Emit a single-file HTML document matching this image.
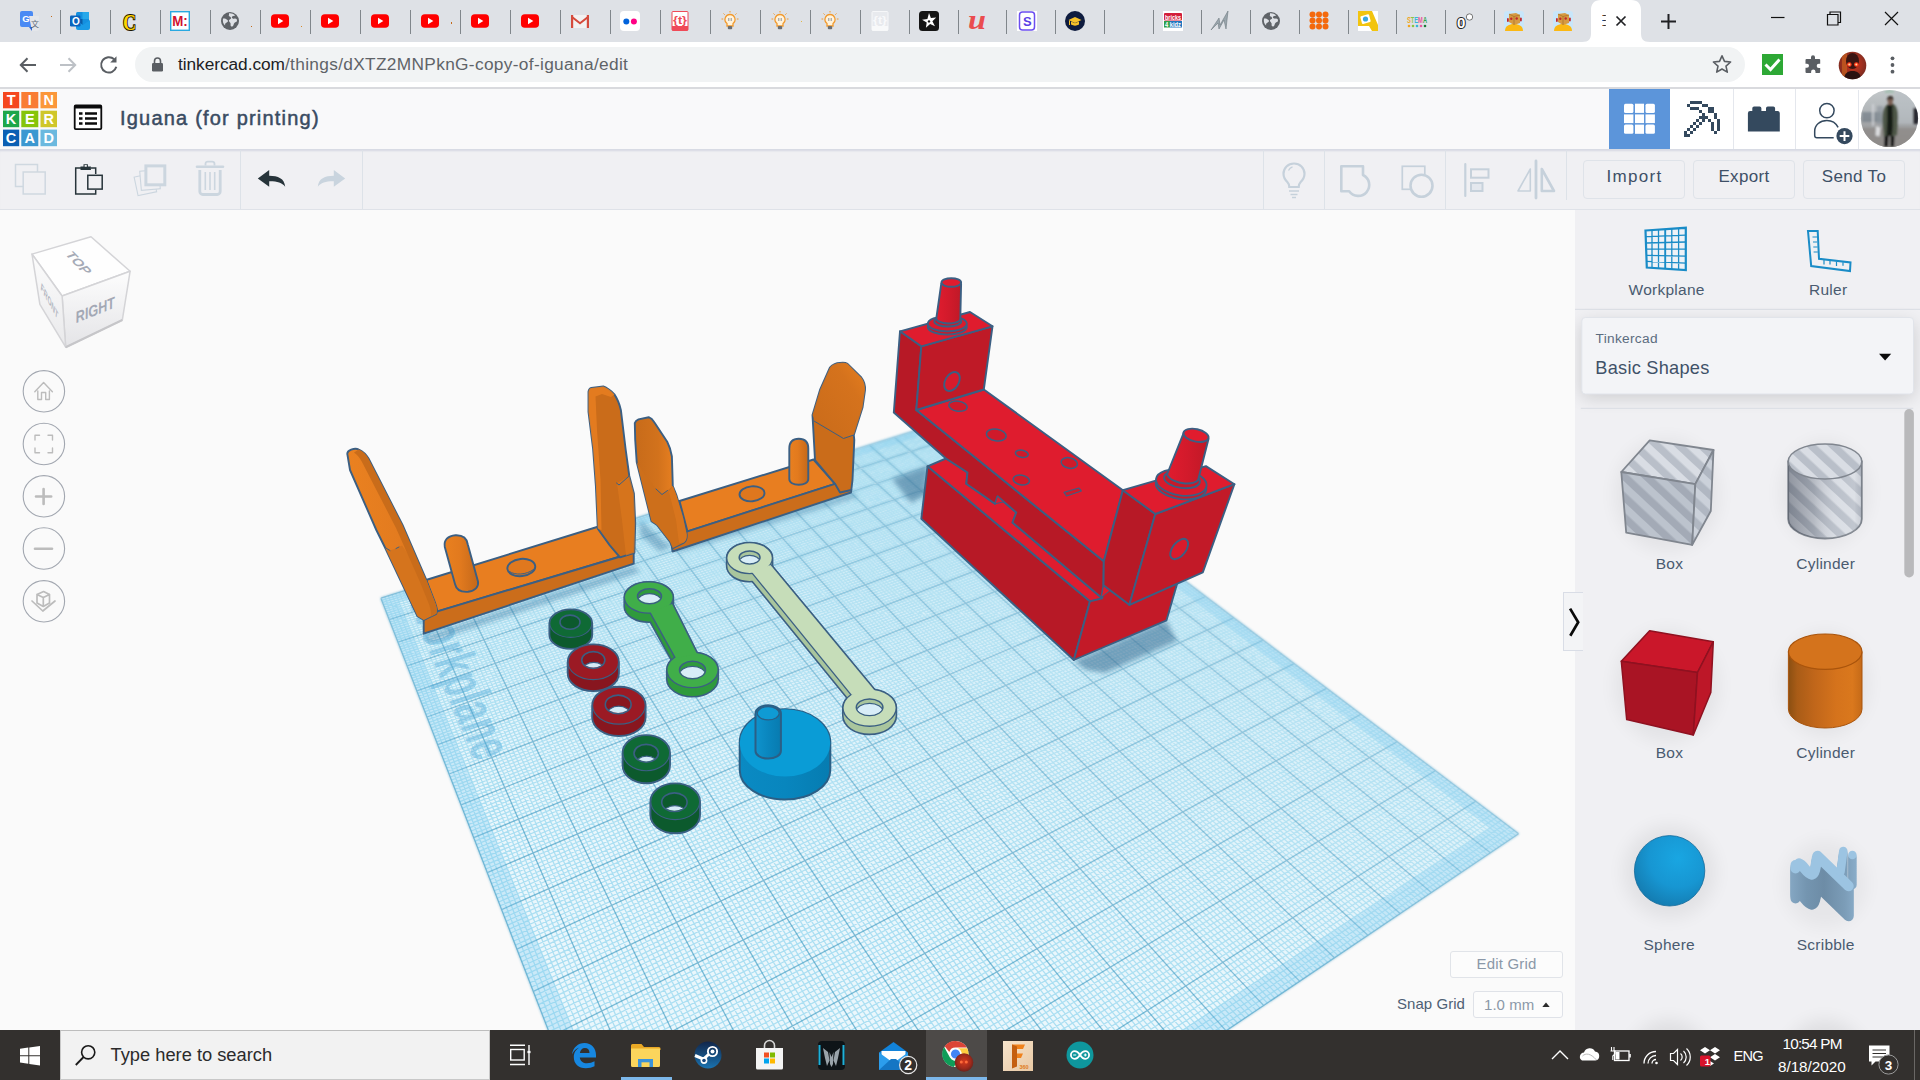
<!DOCTYPE html>
<html lang="en">
<head>
<meta charset="utf-8">
<title>Iguana (for printing) - Tinkercad</title>
<style>
*{box-sizing:border-box;margin:0;padding:0}
html,body{width:1920px;height:1080px;overflow:hidden;background:#fafafa;font-family:"Liberation Sans",sans-serif}
.abs{position:absolute}
#tabs{position:absolute;left:0;top:0;width:1920px;height:42px;background:#dee1e6}
#tabs .sep{position:absolute;top:10px;width:1px;height:24px;background:#80868b}
#tabs svg.fav{position:absolute;top:11px;width:20px;height:20px;overflow:visible}
#addr{position:absolute;left:0;top:42px;width:1920px;height:47px;background:#fff;border-bottom:2px solid #d9dade}
#pill{position:absolute;left:135px;top:5px;width:1610px;height:35px;border-radius:18px;background:#f1f3f4}
#url{position:absolute;left:178px;top:11px;font-size:17.3px;line-height:23px;color:#5f6368;white-space:nowrap;letter-spacing:0.33px}
#url b{font-weight:normal;color:#202124;letter-spacing:-0.05px}
#tkhead{position:absolute;left:0;top:89px;width:1920px;height:60px;background:#f9f9fa}
#tkhead .title{position:absolute;left:120px;top:16px;font-size:20px;line-height:26px;color:#3a4c62;white-space:nowrap;-webkit-text-stroke:0.5px #3a4c62;letter-spacing:1.2px}
#tkbar{position:absolute;left:0;top:149px;width:1920px;height:61px;background:#f0f0f3;border-top:1px solid #d8dbe4;border-bottom:1px solid #dfe2e8;box-shadow:inset 0 2px 2px -1px rgba(110,120,165,.2)}
#tkbar .vs{position:absolute;top:0;width:1px;height:59px;background:#dde2e8}
#tkbar .btn{position:absolute;top:9.5px;height:39px;border:1px solid #dfe3e9;border-radius:4px;font-size:17px;line-height:32px;color:#3e5067;text-align:center;letter-spacing:0.35px}
#canvas{position:absolute;left:0;top:210px;width:1575px;height:820px;background:#fafafa;overflow:hidden}
#panel{position:absolute;left:1575px;top:210px;width:345px;height:820px;background:#f0f0f3;overflow:hidden}
#panel .lbl{position:absolute;font-size:15.5px;line-height:18px;color:#4a5b70;white-space:nowrap;text-align:center;letter-spacing:0.25px}
#task{position:absolute;left:0;top:1030px;width:1920px;height:50px;background:#33302e}
#task .t{position:absolute;color:#fff;white-space:nowrap}
</style>
</head>
<body>
<div id="tabs">
<div class="sep" style="left:60px"></div>
<div class="sep" style="left:110px"></div>
<div class="sep" style="left:160px"></div>
<div class="sep" style="left:210px"></div>
<div class="sep" style="left:260px"></div>
<div class="sep" style="left:310px"></div>
<div class="sep" style="left:360px"></div>
<div class="sep" style="left:410px"></div>
<div class="sep" style="left:460px"></div>
<div class="sep" style="left:510px"></div>
<div class="sep" style="left:560px"></div>
<div class="sep" style="left:610px"></div>
<div class="sep" style="left:659.8px"></div>
<div class="sep" style="left:709.8px"></div>
<div class="sep" style="left:759.8px"></div>
<div class="sep" style="left:809.8px"></div>
<div class="sep" style="left:859.8px"></div>
<div class="sep" style="left:909px"></div>
<div class="sep" style="left:957.5px"></div>
<div class="sep" style="left:1006.2px"></div>
<div class="sep" style="left:1055px"></div>
<div class="sep" style="left:1104px"></div>
<div class="sep" style="left:1153px"></div>
<div class="sep" style="left:1201px"></div>
<div class="sep" style="left:1250.2px"></div>
<div class="sep" style="left:1299px"></div>
<div class="sep" style="left:1348px"></div>
<div class="sep" style="left:1396.2px"></div>
<div class="sep" style="left:1445px"></div>
<div class="sep" style="left:1494px"></div>
<div class="sep" style="left:1543px"></div>
<svg class="fav" style="left:20.3px" viewBox="0 0 20 20"><rect x="0" y="0" width="13" height="16" rx="2" fill="#4a8af4"/><path d="M9 5h10v13a2 2 0 0 1-2 2h-5z" fill="#e4e6ea"/><path d="M9 16l3 4v-4z" fill="#3367d6"/><text x="2.2" y="11" font-size="9.5" font-weight="bold" fill="#fff" font-family="Liberation Sans,sans-serif">G</text><text x="11" y="16" font-size="8" fill="#5f6a78" font-family="Liberation Sans,Noto Sans CJK SC,sans-serif">文</text></svg>
<svg class="fav" style="left:70.3px" viewBox="0 0 20 20"><rect x="6" y="1" width="13" height="14" rx="1.5" fill="#1490df"/><rect x="12.5" y="1" width="6.5" height="7" fill="#28a8ea"/><rect x="6" y="8" width="6.5" height="7" fill="#0a5ea8"/><path d="M6 9l7 5 7-5v8a2 2 0 0 1-2 2H8a2 2 0 0 1-2-2z" fill="#1a9be6"/><rect x="0" y="4.5" width="10.5" height="11" rx="1.2" fill="#0a63bd"/><text x="1.9" y="13.8" font-size="10" font-weight="bold" fill="#fff" font-family="Liberation Sans,sans-serif">O</text></svg>
<svg class="fav" style="left:120.3px" viewBox="0 0 20 20"><text x="3" y="18.5" font-size="24" font-weight="bold" fill="#ffd400" stroke="#1a1400" stroke-width="2.2" paint-order="stroke" font-family="Liberation Serif,serif" textLength="13" lengthAdjust="spacingAndGlyphs">C</text></svg>
<svg class="fav" style="left:170.3px" viewBox="0 0 20 20"><rect x="0.7" y="0.7" width="18.6" height="18.6" fill="#fff" stroke="#29a9e1" stroke-width="1.4"/><text x="2.2" y="15.2" font-size="14" font-weight="bold" fill="#d1122f" font-family="Liberation Sans,sans-serif" textLength="15.5" lengthAdjust="spacingAndGlyphs">M:</text></svg>
<svg class="fav" style="left:220.3px" viewBox="0 0 20 20"><circle cx="10" cy="10" r="9" fill="#5f6368"/><path d="M3 7.5c2-.4 3.2.3 4.5 1.6 1 1 .3 2.2-.8 2.5-1.3.4-1.7 1.3-1.6 3C3.400 13.300 2.400 10.500 3 7.500z" fill="#dee1e6"/><path d="M9 2.200c2.500-.2 4.500.5 6.200 2.200-1.200.8-2.700 0-3.300 1.500-.5 1.400 1.500 1.900 2.800 1.700 1.300-.2 2.300.5 2.300 1.900 0 1.600-1.600 1.500-2.600 2.400-1 .9-.5 2.500-1.700 3.400-1.300.9-2.400-.5-2.100-1.900.3-1.400-.7-1.900-1.400-2.900-.8-1.100.3-2 1.300-2.400 1.300-.6.300-2.200-.7-2.600-.9-.4-1.500-.8-.8-1.300z" fill="#dee1e6"/></svg>
<svg class="fav" style="left:270.3px" viewBox="0 0 20 20"><rect x="1" y="3.200" width="18" height="13.600" rx="3.800" fill="#f00"/><path d="M8 6.700l5.300 3.300L8 13.300z" fill="#fff"/></svg>
<svg class="fav" style="left:320.3px" viewBox="0 0 20 20"><rect x="1" y="3.200" width="18" height="13.600" rx="3.800" fill="#f00"/><path d="M8 6.700l5.300 3.300L8 13.300z" fill="#fff"/></svg>
<svg class="fav" style="left:370.3px" viewBox="0 0 20 20"><rect x="1" y="3.200" width="18" height="13.600" rx="3.800" fill="#f00"/><path d="M8 6.700l5.300 3.300L8 13.300z" fill="#fff"/></svg>
<svg class="fav" style="left:420.3px" viewBox="0 0 20 20"><rect x="1" y="3.200" width="18" height="13.600" rx="3.800" fill="#f00"/><path d="M8 6.700l5.300 3.300L8 13.300z" fill="#fff"/></svg>
<svg class="fav" style="left:470.3px" viewBox="0 0 20 20"><rect x="1" y="3.200" width="18" height="13.600" rx="3.800" fill="#f00"/><path d="M8 6.700l5.300 3.300L8 13.300z" fill="#fff"/></svg>
<svg class="fav" style="left:520.3px" viewBox="0 0 20 20"><rect x="1" y="3.200" width="18" height="13.600" rx="3.800" fill="#f00"/><path d="M8 6.700l5.300 3.300L8 13.300z" fill="#fff"/></svg>
<svg class="fav" style="left:570.3px" viewBox="0 0 20 20"><path d="M1 4h18v13H1z" fill="#f2f2f2"/><path d="M1 4l9 7 9-7v2.500l-9 7-9-7z" fill="#d54b3d"/><path d="M1 4h2.200v13H1zM16.800 4H19v13h-2.200z" fill="#d54b3d"/></svg>
<svg class="fav" style="left:620.3px" viewBox="0 0 20 20"><rect x="0" y="0" width="20" height="20" rx="4" fill="#fff"/><circle cx="6.300" cy="10.500" r="3" fill="#0063dc"/><circle cx="13.900" cy="10.500" r="3" fill="#ff0084"/></svg>
<svg class="fav" style="left:670.1px" viewBox="0 0 20 20"><rect x="2" y="0.500" width="16" height="19" rx="1" fill="#fff" stroke="#ef4a58" stroke-width="1"/><rect x="2" y="15" width="16" height="4.500" fill="#ef4a58"/><text x="3" y="12.500" font-size="10.500" font-weight="bold" fill="#ef4a58" font-family="Liberation Sans,sans-serif" textLength="14" lengthAdjust="spacingAndGlyphs">{t}</text></svg>
<svg class="fav" style="left:720.1px" viewBox="0 0 20 20"><path d="M10 3.500a5 5 0 0 0-3 9v2.500h6v-2.500a5 5 0 0 0-3-9z" fill="#fff3dc" stroke="#f29a2e" stroke-width="1.300"/><rect x="7.800" y="15" width="4.400" height="3.300" rx="1" fill="#6b6f75"/><path d="M10 0v1.500M3.500 2.500l1.200 1.200M16.500 2.500l-1.200 1.200M1.500 8h1.700M18.500 8h-1.700" stroke="#f29a2e" stroke-width="1"/><path d="M8.800 7v3M11.200 7v3" stroke="#8b8f96" stroke-width="1"/></svg>
<svg class="fav" style="left:770.1px" viewBox="0 0 20 20"><path d="M10 3.500a5 5 0 0 0-3 9v2.500h6v-2.500a5 5 0 0 0-3-9z" fill="#fff3dc" stroke="#f29a2e" stroke-width="1.300"/><rect x="7.800" y="15" width="4.400" height="3.300" rx="1" fill="#6b6f75"/><path d="M10 0v1.500M3.500 2.500l1.200 1.200M16.500 2.500l-1.200 1.200M1.500 8h1.700M18.500 8h-1.700" stroke="#f29a2e" stroke-width="1"/><path d="M8.800 7v3M11.200 7v3" stroke="#8b8f96" stroke-width="1"/></svg>
<svg class="fav" style="left:820.1px" viewBox="0 0 20 20"><path d="M10 3.500a5 5 0 0 0-3 9v2.500h6v-2.500a5 5 0 0 0-3-9z" fill="#fff3dc" stroke="#f29a2e" stroke-width="1.300"/><rect x="7.800" y="15" width="4.400" height="3.300" rx="1" fill="#6b6f75"/><path d="M10 0v1.500M3.500 2.500l1.200 1.200M16.500 2.500l-1.200 1.200M1.500 8h1.700M18.500 8h-1.700" stroke="#f29a2e" stroke-width="1"/><path d="M8.800 7v3M11.200 7v3" stroke="#8b8f96" stroke-width="1"/></svg>
<svg class="fav" style="left:870.1px" viewBox="0 0 20 20"><rect x="2" y="0.500" width="16" height="19" rx="1" fill="#e8eaee" stroke="#f6f7f9" stroke-width="1"/><rect x="2" y="15" width="16" height="4.500" fill="#f8f9fa"/><text x="3" y="12.500" font-size="10.500" font-weight="bold" fill="#f8f9fb" font-family="Liberation Sans,sans-serif" textLength="14" lengthAdjust="spacingAndGlyphs">{t}</text></svg>
<svg class="fav" style="left:919.3px" viewBox="0 0 20 20"><rect x="0" y="0" width="20" height="20" rx="3.500" fill="#151515"/><path d="M10 2l1.900 4.900 5.300-.3-3.800 3.700 2.600 5-4.900-2.200-4.200 3.700.8-5.400-4.600-2.700 5.300-.8z" fill="#fff"/><circle cx="10" cy="10.400" r="1.200" fill="#151515"/></svg>
<svg class="fav" style="left:967.8px" viewBox="0 0 20 20"><text x="0" y="18" font-size="27" font-style="italic" font-weight="bold" fill="#ea4c4f" font-family="Liberation Serif,serif" textLength="18" lengthAdjust="spacingAndGlyphs">u</text></svg>
<svg class="fav" style="left:1016.5px" viewBox="0 0 20 20"><rect x="0" y="0" width="20" height="20" fill="#fff"/><rect x="2.500" y="1" width="15" height="18" rx="3" fill="#fff" stroke="#6b4ef0" stroke-width="1.500"/><text x="6" y="15" font-size="13" font-weight="bold" fill="#5b3fe6" font-family="Liberation Sans,sans-serif">S</text></svg>
<svg class="fav" style="left:1065.3px" viewBox="0 0 20 20"><circle cx="10" cy="10" r="10" fill="#0f1c3f"/><path d="M3.500 9l6.500-3 6.500 3-6.500 3z" fill="#f6c12a"/><path d="M6 10.500v3c2.500 1.500 5.500 1.500 8 0v-3l-4 1.800z" fill="#f6c12a"/><path d="M4.500 9.500v4.500" stroke="#f6c12a" stroke-width="1"/></svg>
<svg class="fav" style="left:1163.3px" viewBox="0 0 20 20"><rect x="0" y="0" width="20" height="20" fill="#fff"/><rect x="1" y="2" width="18" height="7.500" rx="1" fill="#d21f3c"/><rect x="1" y="10" width="6" height="6.500" fill="#2e9e4a"/><rect x="7" y="10" width="12" height="6.500" fill="#1f77c0"/><text x="2" y="8.500" font-size="7" font-weight="bold" fill="#fff" font-family="Liberation Sans,sans-serif" textLength="16" lengthAdjust="spacingAndGlyphs">bricks</text><text x="2" y="15.800" font-size="6.500" font-weight="bold" fill="#fff" font-family="Liberation Sans,sans-serif" textLength="16" lengthAdjust="spacingAndGlyphs">4 kidz</text></svg>
<svg class="fav" style="left:1211.3px" viewBox="0 0 20 20"><path d="M0 19L8 7l1 7 8-14-2 18-2-9-5 9-1-6z" fill="#9aa6ad" stroke="#6e7a82" stroke-width=".6"/></svg>
<svg class="fav" style="left:1260.5px" viewBox="0 0 20 20"><circle cx="10" cy="10" r="9" fill="#5f6368"/><path d="M3 7.5c2-.4 3.2.3 4.5 1.6 1 1 .3 2.2-.8 2.5-1.3.4-1.7 1.3-1.6 3C3.400 13.300 2.400 10.500 3 7.500z" fill="#dee1e6"/><path d="M9 2.200c2.500-.2 4.500.5 6.200 2.200-1.200.8-2.700 0-3.300 1.500-.5 1.400 1.500 1.900 2.800 1.700 1.300-.2 2.300.5 2.300 1.900 0 1.600-1.600 1.500-2.600 2.400-1 .9-.5 2.500-1.700 3.400-1.300.9-2.400-.5-2.100-1.900.3-1.400-.7-1.900-1.400-2.900-.8-1.100.3-2 1.300-2.400 1.300-.6.300-2.200-.7-2.600-.9-.4-1.500-.8-.8-1.300z" fill="#dee1e6"/></svg>
<svg class="fav" style="left:1309.3px" viewBox="0 0 20 20"><circle cx="3.5" cy="3.5" r="3" fill="#f4690d"/><circle cx="3.5" cy="9.5" r="3" fill="#f4690d"/><circle cx="3.5" cy="15.5" r="3" fill="#f4690d"/><circle cx="10" cy="3.5" r="3" fill="#f4690d"/><circle cx="10" cy="9.5" r="3" fill="#f4690d"/><circle cx="10" cy="15.5" r="3" fill="#f4690d"/><circle cx="16.5" cy="3.5" r="3" fill="#f4690d"/><circle cx="16.5" cy="9.5" r="3" fill="#f4690d"/><circle cx="16.5" cy="15.5" r="3" fill="#f4690d"/></svg>
<svg class="fav" style="left:1358.3px" viewBox="0 0 20 20"><rect x="0" y="0" width="20" height="20" fill="#fff"/><path d="M0 0h14l6 14v6h-6l-3-5H0z" fill="#f2c40f"/><rect x="3" y="4" width="9" height="8" rx="1" fill="#fff" transform="rotate(-15 8 8)"/><circle cx="7.500" cy="8" r="2.600" fill="#39a7e0"/></svg>
<svg class="fav" style="left:1406.5px" viewBox="0 0 20 20"><text x="0" y="11.500" font-size="8.500" font-weight="bold" font-family="Liberation Sans,sans-serif" textLength="20" lengthAdjust="spacingAndGlyphs"><tspan fill="#f1a51f">S</tspan><tspan fill="#8cc63f">T</tspan><tspan fill="#38b6d8">E</tspan><tspan fill="#e85aa0">M</tspan><tspan fill="#2fa24f">A</tspan></text><circle cx="2" cy="15" r="1.300" fill="#f1a51f"/><circle cx="6" cy="15" r="1.300" fill="#8cc63f"/><circle cx="10" cy="15" r="1.300" fill="#38b6d8"/><circle cx="14" cy="15" r="1.300" fill="#e85aa0"/><circle cx="18" cy="15" r="1.300" fill="#1d7a3a"/></svg>
<svg class="fav" style="left:1455.3px" viewBox="0 0 20 20"><text x="2" y="16.500" font-size="15" font-weight="bold" fill="#fff" stroke="#222" stroke-width="2" paint-order="stroke" font-family="Liberation Sans,sans-serif">0</text><circle cx="14.500" cy="6" r="3.200" fill="#fff" stroke="#555" stroke-width=".8"/></svg>
<svg class="fav" style="left:1504.3px" viewBox="0 0 20 20"><rect x="0" y="0" width="20" height="20" rx="3" fill="#c8e6fa"/><path d="M1 20c0-5 4-7 9-7s9 2 9 7z" fill="#fbb813"/><path d="M5 3l7-1 4 2v8l-6 2-5-3z" fill="#d79a42"/><path d="M5 3l5 2.500 6-1.500M10 5.500V14" stroke="#9a6a25" stroke-width=".6" fill="none"/><circle cx="7.300" cy="7.800" r="1.200" fill="#c0282d"/><circle cx="12.700" cy="7.500" r="1.200" fill="#c0282d"/><rect x="3" y="7" width="1.800" height="4" rx=".9" fill="#c0282d"/><rect x="16" y="6.500" width="1.800" height="4" rx=".9" fill="#c0282d"/></svg>
<svg class="fav" style="left:1553.3px" viewBox="0 0 20 20"><rect x="0" y="0" width="20" height="20" rx="3" fill="#c8e6fa"/><path d="M1 20c0-5 4-7 9-7s9 2 9 7z" fill="#fbb813"/><path d="M5 3l7-1 4 2v8l-6 2-5-3z" fill="#d79a42"/><path d="M5 3l5 2.500 6-1.500M10 5.500V14" stroke="#9a6a25" stroke-width=".6" fill="none"/><circle cx="7.300" cy="7.800" r="1.200" fill="#c0282d"/><circle cx="12.700" cy="7.500" r="1.200" fill="#c0282d"/><rect x="3" y="7" width="1.800" height="4" rx=".9" fill="#c0282d"/><rect x="16" y="6.500" width="1.800" height="4" rx=".9" fill="#c0282d"/></svg>
<div class="abs" style="left:50.5px;top:15.5px;width:1px;height:1.500px;background:#c46a1a"></div>
<div class="abs" style="left:250.5px;top:25.5px;width:1px;height:1.500px;background:#c46a1a"></div>
<div class="abs" style="left:300.5px;top:25.5px;width:1px;height:1.500px;background:#d88a2a"></div>
<div class="abs" style="left:450.5px;top:22px;width:1px;height:1.500px;background:#c46a1a"></div>
<div class="abs" style="left:800.5px;top:20.5px;width:1px;height:1.500px;background:#e2b84a"></div>
<svg class="abs" style="left:1570px;top:0" width="100" height="42" viewBox="0 0 100 42"><path d="M12 42c7 0 9-3 9-9V10c0-6 3-10 10-10h30c7 0 10 4 10 10v23c0 6 2 9 9 9z" fill="#fff"/><path d="M32.500 15.500h3.300M32.500 20.500h3.300M32.500 25.500h3.300" stroke="#2e2e3a" stroke-width="1.100"/><path d="M32 15.500h1.200M32 25.500h1.200" stroke="#e08a3a" stroke-width="1.100"/><path d="M32 20.500h1.200" stroke="#4a7fd0" stroke-width="1.100"/><path d="M46.500 16.500l9 9M55.500 16.500l-9 9" stroke="#202124" stroke-width="1.700"/></svg>
<svg class="abs" style="left:1660px;top:13px" width="17" height="17" viewBox="0 0 17 17"><path d="M8.500 1v15M1 8.500h15" stroke="#202124" stroke-width="2"/></svg>
<svg class="abs" style="left:1760px;top:0" width="160" height="42" viewBox="0 0 160 42"><path d="M11 17.500h13.500" stroke="#111" stroke-width="1.200"/><path d="M67.500 14.500h10.500v10.500h-10.500z" fill="none" stroke="#111" stroke-width="1.200"/><path d="M70 14.500v-2.500h10.500v10.500h-2.500" fill="none" stroke="#111" stroke-width="1.200"/><path d="M125 12l13 13M138 12l-13 13" stroke="#111" stroke-width="1.200"/></svg>
</div>
<div id="addr">
<div id="pill"></div>
<svg class="abs" style="left:17px;top:12px" width="22" height="22" viewBox="0 0 22 22"><path d="M19 11H4M10.500 4.300L3.800 11l6.700 6.700" fill="none" stroke="#5a5e63" stroke-width="2"/></svg>
<svg class="abs" style="left:57px;top:12px" width="22" height="22" viewBox="0 0 22 22"><path d="M3 11h15M11.500 4.300l6.700 6.700-6.700 6.700" fill="none" stroke="#bdc1c6" stroke-width="2"/></svg>
<svg class="abs" style="left:97px;top:11px" width="24" height="24" viewBox="0 0 24 24"><path d="M17.200 6.300A7.700 7.700 0 1 0 19.300 13.800" fill="none" stroke="#5a5e63" stroke-width="2"/><path d="M19.500 3.200v6.300h-6.300z" fill="#5a5e63"/></svg>
<svg class="abs" style="left:151px;top:15px" width="13" height="15" viewBox="0 0 13 15"><rect x="1" y="6" width="11" height="8.500" rx="1.200" fill="#5a5e63"/><path d="M3.500 6.500V4a3 3 0 0 1 6 0v2.500" fill="none" stroke="#5a5e63" stroke-width="1.600"/></svg>
<div id="url"><b>tinkercad.com</b>/things/dXTZ2MNPknG-copy-of-iguana/edit</div>
<svg class="abs" style="left:1711px;top:11px" width="22" height="22" viewBox="0 0 22 22"><path d="M11 2.800l2.500 5.600 6.100.6-4.600 4.100 1.300 6-5.300-3.100-5.300 3.100 1.300-6L2.400 9l6.100-.6z" fill="none" stroke="#5a5e63" stroke-width="1.600" stroke-linejoin="round"/></svg>
<svg class="abs" style="left:1762px;top:12px" width="21" height="21" viewBox="0 0 21 21"><rect x="0" y="0" width="21" height="21" fill="#2da835"/><path d="M3.500 10.500l5 5 9-10" fill="none" stroke="#fff" stroke-width="3"/></svg>
<svg class="abs" style="left:1803px;top:13px" width="20" height="20" viewBox="0 0 20 20"><path d="M8 2.300a2 2 0 0 1 4 0V4h4.200a1 1 0 0 1 1 1v3.800h-1.400a2.100 2.100 0 0 0 0 4.200h1.400V17a1 1 0 0 1-1 1H12.500v-1.300a2.200 2.200 0 0 0-4.400 0V18H3.500a1 1 0 0 1-1-1v-4.300H4a2 2 0 0 0 0-4H2.500V5a1 1 0 0 1 1-1H8z" fill="#5a5e63"/></svg>
<svg class="abs" style="left:1838px;top:9px" width="29" height="29" viewBox="0 0 29 29"><defs><radialGradient id="av1" cx=".5" cy=".45" r=".6"><stop offset="0" stop-color="#c8331c"/><stop offset=".55" stop-color="#a3301f"/><stop offset="1" stop-color="#6e2a22"/></radialGradient><clipPath id="avc"><circle cx="14.500" cy="14.500" r="13.800"/></clipPath></defs><circle cx="14.500" cy="14.500" r="13.800" fill="url(#av1)"/><g clip-path="url(#avc)"><path d="M4 2h5v26H4z" fill="#c4611f" opacity=".7"/><ellipse cx="14.500" cy="10" rx="6.500" ry="8" fill="#3a1512"/><path d="M6 29c0-7 4-9 8.500-9s8.500 2 8.500 9z" fill="#2a1110"/><circle cx="11.300" cy="13.500" r="2.300" fill="#ff3a1a"/><circle cx="18.300" cy="13.500" r="2.300" fill="#ff3a1a"/><circle cx="11.300" cy="13.500" r="1" fill="#ffd9a0"/><circle cx="18.300" cy="13.500" r="1" fill="#ffd9a0"/></g></svg>
<svg class="abs" style="left:1888px;top:12px" width="9" height="22" viewBox="0 0 9 22"><circle cx="4.500" cy="4.300" r="1.900" fill="#5a5e63"/><circle cx="4.500" cy="11" r="1.900" fill="#5a5e63"/><circle cx="4.500" cy="17.700" r="1.900" fill="#5a5e63"/></svg>
</div>
<div id="tkhead">
<svg class="abs" style="left:2px;top:2px" width="56" height="57" viewBox="0 0 56 57" font-family="Liberation Sans,sans-serif" font-weight="bold" font-size="14.500" fill="#fff" text-anchor="middle">
<rect x="1" y="1" width="16.200" height="16.300" fill="#f5471f"/><rect x="19.300" y="1" width="17" height="16.300" fill="#f97c33"/><rect x="38.500" y="1" width="16.500" height="16.300" fill="#fb973a"/>
<rect x="1" y="19.700" width="16.200" height="16.500" fill="#1da64a"/><rect x="19.300" y="19.700" width="17" height="16.500" fill="#86c40a"/><rect x="38.500" y="19.700" width="16.500" height="16.500" fill="#cfc72a"/>
<rect x="1" y="38.600" width="16.200" height="16.600" fill="#0a5fb4"/><rect x="19.300" y="38.600" width="17" height="16.600" fill="#3b98d1"/><rect x="38.500" y="38.600" width="16.500" height="16.600" fill="#6bb9df"/>
<text x="9.100" y="14.300">T</text><text x="27.800" y="14.300">I</text><text x="46.800" y="14.300">N</text>
<text x="9.100" y="33.200">K</text><text x="27.800" y="33.200">E</text><text x="46.800" y="33.200">R</text>
<text x="9.100" y="52.200">C</text><text x="27.800" y="52.200">A</text><text x="46.800" y="52.200">D</text>
</svg>
<svg class="abs" style="left:73px;top:15px" width="30" height="27" viewBox="0 0 30 27"><rect x="1.700" y="1.500" width="26.600" height="23.600" rx="1" fill="#fff" stroke="#0c0c0c" stroke-width="1.800"/><rect x="1.700" y="1.500" width="26.600" height="3" fill="#0c0c0c"/><path d="M6 9.500h3.500M6 14.500h3.500M6 19.500h3.500" stroke="#0c0c0c" stroke-width="2.600"/><path d="M12 9.500h12M12 14.500h12M12 19.500h12" stroke="#0c0c0c" stroke-width="2.600"/></svg>
<div class="title">Iguana (for printing)</div>
<div class="abs" style="left:1670px;top:0;width:250px;height:60px;background:#fff"></div>
<div class="abs" style="left:1609px;top:0;width:61px;height:60px;background:#5c95da"></div>
<svg class="abs" style="left:1624px;top:14px" width="32" height="32" viewBox="0 0 32 32" fill="#fff"><rect x="0" y=".7" width="9.400" height="9.200" rx="1.500"/><rect x="11" y=".7" width="9" height="9.200"/><rect x="21.500" y=".7" width="9.400" height="9.200" rx="1.500"/><rect x="0" y="11.400" width="9.400" height="8.700"/><rect x="11" y="11.400" width="9" height="8.700"/><rect x="21.500" y="11.400" width="9.400" height="8.700"/><rect x="0" y="21.600" width="9.400" height="9.200" rx="1.500"/><rect x="11" y="21.600" width="9" height="9.200"/><rect x="21.500" y="21.600" width="9.400" height="9.200" rx="1.500"/></svg>
<div class="abs" style="left:1733px;top:0;width:1px;height:60px;background:#e4e7ed"></div>
<div class="abs" style="left:1795px;top:0;width:1px;height:60px;background:#e4e7ed"></div>
<div class="abs" style="left:1858px;top:1px;width:1px;height:59px;background:#e4e7ed"></div>
<!-- pickaxe -->
<svg class="abs" style="left:1683.900px;top:12px" width="36" height="36" viewBox="0 0 36 36"><path d="M6 0h3v3h-3zM9 0h3v3h-3zM12 0h3v3h-3zM15 0h3v3h-3zM3 3h3v3h-3zM18 3h3v3h-3zM21 3h3v3h-3zM6 6h3v3h-3zM9 6h3v3h-3zM12 6h3v3h-3zM24 6h3v3h-3zM27 6h3v3h-3zM15 9h3v3h-3zM24 9h3v3h-3zM27 9h3v3h-3zM18 12h3v3h-3zM30 12h3v3h-3zM15 15h3v3h-3zM18 15h3v3h-3zM21 15h3v3h-3zM30 15h3v3h-3zM12 18h3v3h-3zM18 18h3v3h-3zM24 18h3v3h-3zM33 18h3v3h-3zM9 21h3v3h-3zM15 21h3v3h-3zM27 21h3v3h-3zM33 21h3v3h-3zM6 24h3v3h-3zM12 24h3v3h-3zM27 24h3v3h-3zM33 24h3v3h-3zM3 27h3v3h-3zM9 27h3v3h-3zM27 27h3v3h-3zM33 27h3v3h-3zM0 30h3v3h-3zM6 30h3v3h-3zM30 30h3v3h-3zM0 33h3v3h-3zM3 33h3v3h-3z" fill="#34495e"/></svg>
<!-- brick -->
<svg class="abs" style="left:1747px;top:16px" width="34" height="28" viewBox="0 0 34 28" fill="#34495e"><path d="M.9 8.300a2.200 2.200 0 0 1 2.200-2.200h2.200V3.200A1.800 1.800 0 0 1 7.100 1.400h5.500a1.800 1.800 0 0 1 1.800 1.800V6.100h4.600V3.200a1.800 1.800 0 0 1 1.800-1.800h5.500a1.800 1.800 0 0 1 1.800 1.800V6.100h2.500a2.200 2.200 0 0 1 2.200 2.200v18.100H.9z"/></svg>
<!-- person plus -->
<svg class="abs" style="left:1810px;top:10px" width="48" height="50" viewBox="1810 99 48 50"><circle cx="1826.900" cy="110.600" r="7.200" fill="none" stroke="#34495e" stroke-width="1.500"/><path d="M1833.700 137.700H1817Q1814.700 137.700 1814.700 135.400V131C1814.700 125 1820 120.500 1826.900 120.500C1832 120.500 1836 123.200 1838.100 127.400" fill="none" stroke="#34495e" stroke-width="1.500"/><circle cx="1844.500" cy="136.100" r="8.100" fill="#34495e"/><path d="M1844.500 131.300v9.600M1839.700 136.100h9.600" stroke="#fff" stroke-width="2"/></svg>
<!-- avatar -->
<svg class="abs" style="left:1860px;top:0" width="60" height="60" viewBox="1860 89 60 60"><defs><clipPath id="av2c"><circle cx="1889.500" cy="118.500" r="28.600"/></clipPath><linearGradient id="av2g" x1="0" y1="0" x2="0" y2="1"><stop offset="0" stop-color="#c3c8ca"/><stop offset=".45" stop-color="#aeb2b5"/><stop offset=".7" stop-color="#9a9b9c"/><stop offset="1" stop-color="#8b8987"/></linearGradient><filter id="avb" x="-10%" y="-10%" width="120%" height="120%"><feGaussianBlur stdDeviation=".9"/></filter></defs><circle cx="1889.500" cy="118.500" r="28.600" fill="url(#av2g)"/><g clip-path="url(#av2c)"><g filter="url(#avb)"><rect x="1862" y="112" width="19" height="10" fill="#6b7480" opacity=".6"/><rect x="1877" y="106" width="6" height="18" fill="#8b929b" opacity=".6"/><rect x="1872" y="104" width="2" height="22" fill="#d9dcdf" opacity=".7"/><rect x="1895" y="92" width="20" height="32" fill="#b9c0c4" opacity=".6"/><rect x="1885" y="90" width="9" height="3" fill="#6fae86" opacity=".35"/><rect x="1913" y="108" width="6" height="16" fill="#2b2a30"/><rect x="1860" y="128" width="60" height="21" fill="#8e8c8a" opacity=".8"/><path d="M1883.800 136.500L1882.500 122C1882 112 1884 106 1888 104.500L1894 104C1897 106 1898.500 112 1898 120L1897 135.500z" fill="#4e5647"/><path d="M1887 105L1892.500 104.500L1893 125L1892 136H1886.500L1887 122z" fill="#141a17"/><path d="M1884.500 136H1888.500L1888 147H1884zM1890.500 136H1894.500L1894 147H1890.500z" fill="#0f0f11"/><ellipse cx="1890.300" cy="101.500" rx="2.600" ry="3.400" fill="#7a5e52"/><path d="M1887 100.500c0-3.500 2-4.500 3.500-4.500s3.500 1 3 4.500c-1-2-5-2-6.500 0z" fill="#2f2622"/><path d="M1876 126l4.500 1.500-1 9-4-1z" fill="#dcdddf"/></g></g></svg>
</div>
<div id="tkbar">
<!-- copy (disabled) -->
<svg class="abs" style="left:13px;top:12px" width="34" height="34" viewBox="0 0 34 34"><rect x="2.500" y="2.500" width="22" height="22" fill="none" stroke="#cfd8e0" stroke-width="1.500"/><rect x="10.200" y="10" width="22" height="22" fill="#f0f0f3" stroke="#cfd8e0" stroke-width="1.500"/></svg>
<!-- paste -->
<svg class="abs" style="left:73px;top:12px" width="32" height="34" viewBox="0 0 32 34"><path d="M8 6H2.700v26h20v-4" fill="none" stroke="#27343a" stroke-width="1.500"/><path d="M18 6h4.700v6" fill="none" stroke="#27343a" stroke-width="1.500"/><path d="M7.500 8V4.500h3V2.200h4.400v2.300h3V8z" fill="#27343a"/><rect x="11.600" y="3" width="2.200" height="1.800" fill="#f0f0f3"/><rect x="14.800" y="13.300" width="14.400" height="13.800" fill="#f0f0f3" stroke="#27343a" stroke-width="1.500"/></svg>
<!-- duplicate (disabled) -->
<svg class="abs" style="left:131px;top:11px" width="38" height="38" viewBox="0 0 38 38"><g fill="#f0f0f3" stroke="#ccd6df"><rect x="5" y="14" width="19" height="19" stroke-width="1.100" transform="rotate(-12 14 24)"/><rect x="9.500" y="9.500" width="19" height="19" stroke-width="1.100" transform="rotate(-5 19 19)"/><rect x="14.900" y="4.900" width="18.900" height="18.900" stroke-width="3"/></g></svg>
<!-- trash (disabled) -->
<svg class="abs" style="left:195px;top:9px" width="30" height="40" viewBox="0 0 30 40"><path d="M10.500 6.500V4.800a2.200 2.200 0 0 1 2.200-2.200h4.600a2.200 2.200 0 0 1 2.200 2.200v1.700" fill="none" stroke="#ccd6df" stroke-width="1.800"/><path d="M2 7.800h26" stroke="#ccd6df" stroke-width="2.600" stroke-linecap="round"/><path d="M4.800 11v21.500a3 3 0 0 0 3 3h14.400a3 3 0 0 0 3-3V11" fill="none" stroke="#ccd6df" stroke-width="2.800"/><path d="M10.300 13v18M15 13v18M19.700 13v18" stroke="#ccd6df" stroke-width="1.600"/></svg>
<div class="vs" style="left:240px"></div>
<!-- undo -->
<svg class="abs" style="left:257px;top:19px" width="30" height="20" viewBox="0 0 30 20"><path d="M.8 9.500L12.200 1V6.800C21 6.800 27.500 9.500 28.200 17.800 25 13.500 20 12.200 12.200 12.300V17.800z" fill="#27343a"/></svg>
<!-- redo -->
<svg class="abs" style="left:316px;top:19px" width="30" height="20" viewBox="0 0 30 20"><path d="M29.200 9.500L17.800 1V6.800C9 6.800 2.500 9.500 1.800 17.800 5 13.500 10 12.200 17.800 12.300V17.800z" fill="#c9d4de"/></svg>
<div class="vs" style="left:362px"></div>
<div class="vs" style="left:1263px"></div>
<!-- bulb -->
<svg class="abs" style="left:1280px;top:10px" width="28" height="40" viewBox="0 0 28 40"><path d="M14 3.500c-6 0-10.500 4.500-10.500 10.300 0 3.600 1.800 6.300 4 8.500 1.200 1.300 1.800 2.800 1.800 4.700h9.400c0-1.900.6-3.400 1.800-4.700 2.200-2.200 4-4.900 4-8.500C24.500 8 20 3.500 14 3.500z" fill="none" stroke="#c6d1db" stroke-width="2.200"/><path d="M8.500 10.500c.8-1.800 2.200-3 4-3.600" fill="none" stroke="#c6d1db" stroke-width="1.300"/><path d="M9 31h10M10.500 34.500h7M12 37.500h4" stroke="#c6d1db" stroke-width="1.700"/></svg>
<div class="vs" style="left:1324px"></div>
<!-- group -->
<svg class="abs" style="left:1338px;top:13px" width="36" height="36" viewBox="0 0 36 36"><path d="M3.300 3.300h21.700v8.700a11 11 0 1 1-13.800 16.200H3.300z" fill="none" stroke="#c6d1db" stroke-width="2.600" stroke-linejoin="round"/></svg>
<!-- ungroup -->
<svg class="abs" style="left:1399px;top:13px" width="36" height="36" viewBox="0 0 36 36"><rect x="3.300" y="3.300" width="22.500" height="23" fill="none" stroke="#c6d1db" stroke-width="1.700"/><circle cx="22.500" cy="22.700" r="11" fill="#f0f0f3" stroke="#c6d1db" stroke-width="2.600"/></svg>
<div class="vs" style="left:1445px"></div>
<!-- align -->
<svg class="abs" style="left:1462px;top:12px" width="30" height="36" viewBox="0 0 30 36"><path d="M3.300 2v32" stroke="#c6d1db" stroke-width="2.200" stroke-linecap="round"/><rect x="9" y="7.300" width="17.500" height="8.400" fill="none" stroke="#c6d1db" stroke-width="2"/><rect x="9" y="21" width="11.500" height="8" fill="#e4e8ee" stroke="#c6d1db" stroke-width="2"/></svg>
<!-- mirror -->
<svg class="abs" style="left:1515px;top:7.500px" width="42" height="42" viewBox="0 0 42 42"><path d="M21 3v37" stroke="#c6d1db" stroke-width="2.800" stroke-linecap="round"/><path d="M15.300 11v22H3z" fill="none" stroke="#c6d1db" stroke-width="1.600" stroke-linejoin="round"/><path d="M26.800 11v22H39z" fill="#f0f0f3" stroke="#c6d1db" stroke-width="2.600" stroke-linejoin="round"/></svg>
<div class="vs" style="left:1566px;height:50px"></div>
<div class="btn" style="left:1583px;width:102px;letter-spacing:1.3px;padding-left:1px">Import</div>
<div class="btn" style="left:1693px;width:102px">Export</div>
<div class="btn" style="left:1803px;width:102px">Send To</div>
</div>
<div id="canvas"><svg class="abs" style="left:0;top:0" width="1575" height="820" viewBox="0 210 1575 820">
<defs>
<filter id="shb" x="-30%" y="-30%" width="160%" height="160%"><feGaussianBlur stdDeviation="5"/></filter>
<filter id="shs" x="-30%" y="-30%" width="160%" height="160%"><feGaussianBlur stdDeviation="2.500"/></filter>
<linearGradient id="pegO" x1="0" y1="0" x2="1" y2="0"><stop offset="0" stop-color="#e9801f"/><stop offset=".45" stop-color="#e27a1e"/><stop offset="1" stop-color="#c4681a"/></linearGradient>
<linearGradient id="armO" x1="1" y1="0" x2="0" y2="1"><stop offset="0" stop-color="#e9801f"/><stop offset=".3" stop-color="#d6731d"/><stop offset="1" stop-color="#c96b1a"/></linearGradient>
<linearGradient id="armL" x1="0" y1="0" x2="1" y2="0"><stop offset="0" stop-color="#ea8120"/><stop offset=".6" stop-color="#e37b1f"/><stop offset="1" stop-color="#cf701c"/></linearGradient>
<linearGradient id="pegB" x1="0" y1="0" x2="1" y2="0"><stop offset="0" stop-color="#0f93cd"/><stop offset=".5" stop-color="#0a86be"/><stop offset="1" stop-color="#087bb0"/></linearGradient>
<linearGradient id="sideB" x1="0" y1="0" x2="1" y2="0"><stop offset="0" stop-color="#0a8ac3"/><stop offset=".5" stop-color="#0886be"/><stop offset="1" stop-color="#067cb1"/></linearGradient>
<linearGradient id="pegR" x1="0" y1="0" x2="1" y2="0"><stop offset="0" stop-color="#e01c2e"/><stop offset=".5" stop-color="#d21a2b"/><stop offset="1" stop-color="#bf1927"/></linearGradient>
<linearGradient id="armL2" x1="0" y1="0" x2="1" y2="0"><stop offset="0" stop-color="#c76b1a"/><stop offset=".45" stop-color="#d2721c"/><stop offset=".75" stop-color="#e77f20"/><stop offset="1" stop-color="#e98020"/></linearGradient>
<filter id="gridblur" filterUnits="userSpaceOnUse" x="370" y="400" width="1160" height="640"><feGaussianBlur stdDeviation=".9"/></filter>
<linearGradient id="gmg" gradientUnits="userSpaceOnUse" x1="900" y1="440" x2="760" y2="900"><stop offset="0" stop-color="#fff" stop-opacity=".12"/><stop offset=".35" stop-color="#fff" stop-opacity=".45"/><stop offset="1" stop-color="#fff" stop-opacity=".95"/></linearGradient>
<mask id="gridmask" maskUnits="userSpaceOnUse" x="370" y="400" width="1160" height="640"><rect x="370" y="400" width="1160" height="640" fill="url(#gmg)"/></mask>
</defs>

<defs><g id="gridc">
<polygon points="381.0,598.2 965.8,414.7 1518.5,833.8 688.8,1392.4" fill="#ebf7fc"/>
<path d="M384.7 597.0L695.0 1388.2M381.8 600.3L967.5 416.0M388.4 595.9L701.2 1384.0M382.6 602.4L969.3 417.3M392.1 594.7L707.3 1379.9M383.5 604.5L971.0 418.7M395.7 593.6L713.4 1375.8M384.3 606.7L972.8 420.0M399.4 592.4L719.5 1371.6M385.1 608.8L974.5 421.3M403.0 591.3L725.6 1367.6M386.0 611.0L976.3 422.7M406.7 590.1L731.6 1363.5M386.8 613.1L978.1 424.0M410.3 589.0L737.7 1359.5M387.6 615.3L979.9 425.4M413.9 587.9L743.6 1355.4M388.5 617.5L981.7 426.7M421.1 585.6L755.5 1347.4M390.2 621.9L985.3 429.5M424.7 584.5L761.4 1343.5M391.0 624.1L987.1 430.8M428.3 583.4L767.3 1339.5M391.9 626.3L988.9 432.2M431.9 582.2L773.1 1335.6M392.8 628.5L990.7 433.6M435.4 581.1L778.9 1331.7M393.6 630.8L992.5 435.0M439.0 580.0L784.7 1327.8M394.5 633.1L994.4 436.4M442.5 578.9L790.4 1323.9M395.4 635.3L996.2 437.8M446.1 577.8L796.1 1320.1M396.3 637.6L998.1 439.2M449.6 576.7L801.8 1316.2M397.2 639.9L999.9 440.6M456.6 574.5L813.1 1308.6M399.0 644.5L1003.7 443.4M460.1 573.4L818.8 1304.9M399.9 646.8L1005.5 444.8M463.6 572.3L824.3 1301.1M400.8 649.2L1007.4 446.3M467.1 571.2L829.9 1297.4M401.7 651.5L1009.3 447.7M470.6 570.1L835.4 1293.6M402.6 653.9L1011.2 449.2M474.0 569.0L840.9 1289.9M403.5 656.3L1013.1 450.6M477.5 567.9L846.4 1286.2M404.4 658.6L1015.1 452.1M480.9 566.9L851.9 1282.6M405.4 661.0L1017.0 453.5M484.4 565.8L857.3 1278.9M406.3 663.5L1018.9 455.0M491.2 563.6L868.1 1271.6M408.2 668.3L1022.8 457.9M494.6 562.6L873.4 1268.0M409.1 670.8L1024.8 459.4M498.0 561.5L878.8 1264.5M410.1 673.2L1026.7 460.9M501.4 560.4L884.1 1260.9M411.0 675.7L1028.7 462.4M504.8 559.4L889.4 1257.3M412.0 678.2L1030.7 463.9M508.2 558.3L894.6 1253.8M413.0 680.7L1032.7 465.4M511.5 557.2L899.8 1250.3M413.9 683.2L1034.6 466.9M514.9 556.2L905.1 1246.8M414.9 685.7L1036.7 468.4M518.2 555.1L910.2 1243.3M415.9 688.2L1038.7 470.0M524.9 553.0L920.5 1236.3M417.9 693.3L1042.7 473.0M528.2 552.0L925.6 1232.9M418.9 695.9L1044.7 474.6M531.5 551.0L930.7 1229.5M419.9 698.5L1046.8 476.1M534.9 549.9L935.8 1226.1M420.9 701.1L1048.8 477.7M538.2 548.9L940.8 1222.7M421.9 703.7L1050.9 479.2M541.4 547.9L945.9 1219.3M422.9 706.4L1053.0 480.8M544.7 546.8L950.9 1215.9M424.0 709.0L1055.0 482.4M548.0 545.8L955.8 1212.6M425.0 711.7L1057.1 484.0M551.3 544.8L960.8 1209.2M426.0 714.3L1059.2 485.6M557.8 542.7L970.6 1202.6M428.1 719.7L1063.4 488.7M561.0 541.7L975.5 1199.3M429.2 722.4L1065.6 490.4M564.3 540.7L980.4 1196.0M430.2 725.2L1067.7 492.0M567.5 539.7L985.2 1192.8M431.3 727.9L1069.8 493.6M570.7 538.7L990.1 1189.5M432.4 730.7L1072.0 495.2M573.9 537.7L994.9 1186.3M433.4 733.5L1074.1 496.9M577.1 536.7L999.6 1183.1M434.5 736.3L1076.3 498.5M580.3 535.7L1004.4 1179.9M435.6 739.1L1078.5 500.1M583.5 534.7L1009.1 1176.7M436.7 741.9L1080.6 501.8M589.8 532.7L1018.5 1170.4M438.9 747.6L1085.0 505.1M593.0 531.7L1023.2 1167.2M440.0 750.4L1087.3 506.8M596.2 530.7L1027.9 1164.1M441.1 753.3L1089.5 508.5M599.3 529.7L1032.5 1160.9M442.2 756.2L1091.7 510.2M602.4 528.7L1037.1 1157.8M443.4 759.1L1093.9 511.9M605.6 527.7L1041.7 1154.7M444.5 762.1L1096.2 513.6M608.7 526.8L1046.3 1151.7M445.7 765.0L1098.4 515.3M611.8 525.8L1050.9 1148.6M446.8 768.0L1100.7 517.0M614.9 524.8L1055.4 1145.5M448.0 771.0L1103.0 518.7M621.1 522.9L1064.4 1139.5M450.3 777.0L1107.6 522.2M624.2 521.9L1068.9 1136.5M451.5 780.0L1109.9 524.0M627.3 520.9L1073.4 1133.5M452.7 783.1L1112.2 525.7M630.4 520.0L1077.8 1130.5M453.8 786.1L1114.5 527.5M633.4 519.0L1082.2 1127.5M455.0 789.2L1116.9 529.3M636.5 518.0L1086.6 1124.5M456.2 792.3L1119.2 531.0M639.5 517.1L1091.0 1121.6M457.4 795.5L1121.6 532.8M642.6 516.1L1095.4 1118.6M458.7 798.6L1123.9 534.6M645.6 515.2L1099.7 1115.7M459.9 801.7L1126.3 536.4M651.7 513.3L1108.4 1109.9M462.4 808.1L1131.1 540.1M654.7 512.3L1112.7 1107.0M463.6 811.3L1133.5 541.9M657.7 511.4L1116.9 1104.1M464.9 814.6L1135.9 543.7M660.7 510.4L1121.2 1101.2M466.1 817.8L1138.4 545.6M663.7 509.5L1125.4 1098.4M467.4 821.1L1140.8 547.4M666.6 508.6L1129.7 1095.5M468.7 824.4L1143.3 549.3M669.6 507.6L1133.9 1092.7M469.9 827.7L1145.7 551.1M672.6 506.7L1138.1 1089.9M471.2 831.0L1148.2 553.0M675.6 505.8L1142.2 1087.1M472.5 834.4L1150.7 554.9M681.5 503.9L1150.5 1081.5M475.1 841.1L1155.7 558.7M684.4 503.0L1154.6 1078.7M476.5 844.5L1158.2 560.6M687.3 502.1L1158.7 1076.0M477.8 848.0L1160.7 562.5M690.3 501.2L1162.8 1073.2M479.1 851.4L1163.3 564.5M693.2 500.2L1166.9 1070.5M480.5 854.9L1165.8 566.4M696.1 499.3L1171.0 1067.7M481.8 858.4L1168.4 568.3M699.0 498.4L1175.0 1065.0M483.2 861.9L1171.0 570.3M701.9 497.5L1179.0 1062.3M484.6 865.4L1173.6 572.3M704.8 496.6L1183.0 1059.6M485.9 869.0L1176.2 574.2M710.6 494.8L1191.0 1054.3M488.7 876.2L1181.4 578.2M713.4 493.9L1194.9 1051.6M490.1 879.8L1184.0 580.2M716.3 493.0L1198.9 1048.9M491.5 883.5L1186.7 582.2M719.2 492.1L1202.8 1046.3M493.0 887.1L1189.3 584.2M722.0 491.2L1206.7 1043.7M494.4 890.8L1192.0 586.2M724.9 490.3L1210.6 1041.1M495.8 894.5L1194.7 588.3M727.7 489.4L1214.5 1038.4M497.3 898.3L1197.4 590.3M730.5 488.5L1218.4 1035.8M498.7 902.0L1200.1 592.4M733.4 487.6L1222.2 1033.2M500.2 905.8L1202.8 594.4M739.0 485.9L1229.9 1028.1M503.2 913.5L1208.3 598.6M741.8 485.0L1233.7 1025.5M504.7 917.3L1211.1 600.7M744.6 484.1L1237.4 1023.0M506.2 921.2L1213.8 602.8M747.4 483.2L1241.2 1020.4M507.7 925.1L1216.6 604.9M750.2 482.4L1245.0 1017.9M509.2 929.1L1219.4 607.0M753.0 481.5L1248.7 1015.4M510.8 933.0L1222.2 609.2M755.8 480.6L1252.4 1012.9M512.3 937.0L1225.1 611.3M758.5 479.7L1256.2 1010.4M513.9 941.0L1227.9 613.5M761.3 478.9L1259.9 1007.9M515.4 945.1L1230.8 615.6M766.8 477.1L1267.2 1002.9M518.6 953.2L1236.5 620.0M769.5 476.3L1270.9 1000.5M520.2 957.4L1239.4 622.2M772.3 475.4L1274.5 998.0M521.8 961.5L1242.3 624.4M775.0 474.6L1278.2 995.6M523.4 965.7L1245.3 626.6M777.7 473.7L1281.8 993.1M525.0 969.9L1248.2 628.9M780.4 472.9L1285.4 990.7M526.7 974.1L1251.1 631.1M783.2 472.0L1289.0 988.3M528.3 978.4L1254.1 633.3M785.9 471.2L1292.5 985.9M530.0 982.7L1257.1 635.6M788.6 470.3L1296.1 983.5M531.7 987.0L1260.1 637.9M793.9 468.6L1303.2 978.7M535.0 995.7L1266.1 642.5M796.6 467.8L1306.7 976.4M536.8 1000.1L1269.2 644.8M799.3 466.9L1310.2 974.0M538.5 1004.6L1272.2 647.1M802.0 466.1L1313.7 971.6M540.2 1009.0L1275.3 649.4M804.6 465.3L1317.2 969.3M542.0 1013.5L1278.4 651.8M807.3 464.4L1320.6 967.0M543.7 1018.1L1281.5 654.1M810.0 463.6L1324.1 964.6M545.5 1022.6L1284.6 656.5M812.6 462.8L1327.5 962.3M547.3 1027.2L1287.7 658.8M815.2 461.9L1331.0 960.0M549.0 1031.8L1290.9 661.2M820.5 460.3L1337.8 955.4M552.7 1041.2L1297.2 666.0M823.1 459.5L1341.2 953.1M554.5 1045.9L1300.4 668.5M825.7 458.7L1344.6 950.9M556.3 1050.7L1303.7 670.9M828.3 457.8L1347.9 948.6M558.2 1055.5L1306.9 673.4M831.0 457.0L1351.3 946.3M560.1 1060.3L1310.1 675.8M833.6 456.2L1354.6 944.1M562.0 1065.2L1313.4 678.3M836.1 455.4L1358.0 941.9M563.9 1070.1L1316.7 680.8M838.7 454.6L1361.3 939.6M565.8 1075.0L1320.0 683.3M841.3 453.8L1364.6 937.4M567.7 1080.0L1323.3 685.8M846.5 452.1L1371.2 933.0M571.6 1090.0L1330.0 690.9M849.0 451.3L1374.4 930.8M573.6 1095.1L1333.3 693.4M851.6 450.5L1377.7 928.6M575.5 1100.2L1336.7 696.0M854.1 449.7L1380.9 926.4M577.5 1105.4L1340.1 698.6M856.7 448.9L1384.2 924.2M579.6 1110.6L1343.5 701.2M859.2 448.1L1387.4 922.0M581.6 1115.8L1347.0 703.8M861.8 447.3L1390.6 919.9M583.6 1121.1L1350.4 706.4M864.3 446.6L1393.8 917.7M585.7 1126.4L1353.9 709.0M866.8 445.8L1397.0 915.6M587.8 1131.7L1357.4 711.7M871.9 444.2L1403.3 911.3M591.9 1142.6L1364.4 717.0M874.4 443.4L1406.5 909.2M594.1 1148.0L1368.0 719.7M876.9 442.6L1409.6 907.1M596.2 1153.6L1371.5 722.4M879.4 441.8L1412.7 905.0M598.4 1159.1L1375.1 725.1M881.9 441.0L1415.9 902.9M600.5 1164.7L1378.7 727.9M884.3 440.3L1419.0 900.8M602.7 1170.4L1382.4 730.6M886.8 439.5L1422.1 898.7M604.9 1176.1L1386.0 733.4M889.3 438.7L1425.2 896.6M607.1 1181.8L1389.7 736.1M891.8 437.9L1428.2 894.5M609.4 1187.6L1393.4 738.9M896.7 436.4L1434.3 890.4M613.9 1199.3L1400.8 744.6M899.2 435.6L1437.4 888.4M616.2 1205.2L1404.5 747.4M901.6 434.8L1440.4 886.3M618.5 1211.1L1408.3 750.3M904.0 434.1L1443.4 884.3M620.9 1217.2L1412.1 753.1M906.5 433.3L1446.5 882.3M623.2 1223.2L1415.9 756.0M908.9 432.5L1449.5 880.3M625.6 1229.3L1419.7 758.9M911.3 431.8L1452.4 878.2M628.0 1235.5L1423.6 761.9M913.8 431.0L1455.4 876.2M630.4 1241.7L1427.4 764.8M916.2 430.3L1458.4 874.2M632.8 1248.0L1431.3 767.7M921.0 428.8L1464.3 870.3M637.7 1260.6L1439.2 773.7M923.4 428.0L1467.2 868.3M640.2 1267.1L1443.2 776.7M925.8 427.2L1470.2 866.3M642.7 1273.5L1447.1 779.7M928.2 426.5L1473.1 864.3M645.2 1280.1L1451.1 782.8M930.6 425.7L1476.0 862.4M647.8 1286.6L1455.2 785.8M933.0 425.0L1478.9 860.4M650.3 1293.3L1459.2 788.9M935.3 424.3L1481.8 858.5M652.9 1300.0L1463.3 792.0M937.7 423.5L1484.7 856.6M655.6 1306.7L1467.4 795.1M940.1 422.8L1487.5 854.6M658.2 1313.5L1471.5 798.2M944.8 421.3L1493.2 850.8M663.5 1327.3L1479.8 804.5M947.2 420.5L1496.1 848.9M666.2 1334.3L1484.0 807.7M949.5 419.8L1498.9 847.0M669.0 1341.3L1488.2 810.9M951.8 419.1L1501.7 845.1M671.7 1348.4L1492.5 814.1M954.2 418.3L1504.5 843.2M674.5 1355.6L1496.7 817.3M956.5 417.6L1507.3 841.3M677.3 1362.8L1501.0 820.6M958.8 416.9L1510.1 839.4M680.1 1370.1L1505.4 823.9M961.2 416.2L1512.9 837.5M683.0 1377.5L1509.7 827.2M963.5 415.4L1515.7 835.7M685.8 1384.9L1514.1 830.5" stroke="#79cbe9" stroke-width="1.25" stroke-opacity=".58" fill="none"/>
<path d="M381.0 598.2L688.8 1392.4M381.0 598.2L965.8 414.7M417.5 586.7L749.6 1351.4M389.3 619.7L983.4 428.1M453.1 575.6L807.5 1312.4M398.1 642.2L1001.8 442.0M487.8 564.7L862.7 1275.3M407.2 665.9L1020.8 456.5M521.6 554.1L915.4 1239.8M416.9 690.8L1040.7 471.5M554.5 543.8L965.7 1205.9M427.1 717.0L1061.3 487.1M586.7 533.7L1013.9 1173.5M437.8 744.7L1082.8 503.5M618.0 523.8L1059.9 1142.5M449.1 774.0L1105.3 520.5M648.6 514.2L1104.1 1112.8M461.1 804.9L1128.7 538.2M678.5 504.8L1146.4 1084.3M473.8 837.7L1153.2 556.8M707.7 495.7L1187.0 1056.9M487.3 872.6L1178.8 576.2M736.2 486.7L1226.0 1030.7M501.7 909.6L1205.6 596.5M764.0 478.0L1263.6 1005.4M517.0 949.1L1233.6 617.8M791.3 469.5L1299.6 981.1M533.4 991.3L1263.1 640.2M817.9 461.1L1334.4 957.7M550.9 1036.5L1294.1 663.6M843.9 453.0L1367.9 935.2M569.6 1085.0L1326.6 688.3M869.3 445.0L1400.1 913.4M589.8 1137.1L1360.9 714.3M894.2 437.2L1431.3 892.5M611.6 1193.4L1397.1 741.7M918.6 429.5L1461.4 872.2M635.2 1254.3L1435.3 770.7M942.4 422.0L1490.4 852.7M660.8 1320.4L1475.7 801.3M965.8 414.7L1518.5 833.8M688.8 1392.4L1518.5 833.8" stroke="#2f92bc" stroke-width="1.3" stroke-opacity=".62" fill="none"/>
<path d="M381.0,598.2 L965.8,414.7 L1518.5,833.8 L688.8,1392.4 z M399.1,602.0 L701.7,1346.8 L1489.9,827.9 L963.5,423.0 z" fill="#7fcbee" fill-opacity=".3" fill-rule="evenodd"/>
</g></defs>
<use href="#gridc" filter="url(#gridblur)"/><use href="#gridc" mask="url(#gridmask)"/>
<text transform="matrix(0.8760 2.1033 -3.6718 1.1653 407.42 599.81)" font-family="Liberation Sans,sans-serif" font-weight="bold" font-size="15.2" fill="#4aa6d6" fill-opacity="0.4">Workplane</text>
<g stroke-linejoin="round" stroke-linecap="round">
<!-- ===== shadows ===== -->
<g filter="url(#shs)" fill="#2a5f86" opacity=".5">
<path d="M892 479L928 466L926 495L911 503z"/>
<path d="M1074 661L1166 620L1177 641L1105 673L1086 670z"/>
</g>
<g filter="url(#shs)" fill="#1c5f8c" opacity=".35">
<path d="M425 636L634 566L640 572L430 642z"/>
<path d="M674 548L852 493L858 497L680 552z"/>
<path d="M640 520L664 541L672 546L660 552L640 535z"/>
</g>

<!-- ===== Red object ===== -->
<g stroke="#3b5f83" stroke-width="1.900">
<!-- base front-left face (dark) -->
<path d="M927.500 466.300L1090 601.300L1073.800 660L921.300 518.800z" fill="#b71926"/>
<!-- base top strip (bright) -->
<path d="M927.500 466.300L946 458.500L967.500 472.500L966.300 483.800L995 503.800L997.500 496.300L1016.300 512.500L1012.500 522.500L1101.300 597.500L1102.200 598.300L1090 601.300z" fill="#df1c2e"/>
<!-- base right-end face (bright) -->
<path d="M1090 601.300L1102.200 598.300L1103.500 585.300L1129.400 604.800L1177.400 582.700L1166.500 620.300L1073.800 660z" fill="#c31a28"/>
<!-- bar dark side + left block left face -->
<path d="M900 331.300L921.300 346.300L916.300 410L1103.800 561.300L1103.500 585.300L1101.300 597.500L1012.500 522.500L1016.300 512.500L997.500 496.300L995 503.800L966.300 483.800L967.500 472.500L946 458.500L893.800 412.500z" fill="#b71926"/>
<path d="M997.500 496.300L995 503.800L1003 502z" fill="#df1c2e" stroke-width="1"/>
<path d="M1103.500 585.300L1101.300 597.500L1110 590.500z" fill="#df1c2e" stroke-width="1"/>
<!-- bar top (bright) -->
<path d="M916.300 410L983.800 389.500L1122.900 490.200L1103.800 561.300z" fill="#df1c2e"/>
<!-- left block front face (dark, with hole) -->
<path d="M921.300 346.300L992.500 326.300L983.800 389.500L916.300 410z" fill="#bf1a27"/>
<!-- left block top -->
<path d="M900 331.300L970 312L992.500 326.300L921.300 346.300z" fill="#df1c2e"/>
<!-- left block hole -->
<ellipse cx="952" cy="381.500" rx="6.800" ry="10.300" fill="#d81b2c" transform="rotate(30 952 381.500)"/>
<!-- left peg: flange + cone -->
<ellipse cx="947.300" cy="327" rx="19.500" ry="7.600" fill="#c81a29"/>
<ellipse cx="947.300" cy="323.800" rx="19.500" ry="7.600" fill="#d91b2c"/>
<ellipse cx="947.800" cy="321.500" rx="13.500" ry="5" fill="#c81a29"/>
<path d="M941.300 283.500L936.300 318.500c0 2.500 5 5 12 5s12-2 12-4.500l.8-35z" fill="url(#pegR)"/>
<ellipse cx="951.300" cy="282.500" rx="9.800" ry="4.300" fill="#e01c2e"/>
<!-- bar holes -->
<g fill="#cf1a2a" stroke-width="1.500">
<ellipse cx="958" cy="406.200" rx="9.300" ry="5" transform="rotate(8 958 406.200)"/>
<ellipse cx="996.300" cy="435" rx="10" ry="5.800" transform="rotate(10 996.300 435)"/>
<ellipse cx="1021.800" cy="453.800" rx="6.500" ry="3.600" transform="rotate(10 1021.800 453.800)"/>
<ellipse cx="1021.300" cy="480" rx="8.200" ry="4.800" transform="rotate(10 1021.300 480)"/>
<ellipse cx="1069.300" cy="463" rx="8.300" ry="5.200" transform="rotate(12 1069.300 463)"/>
<path d="M1064 492.300L1078.800 488L1081.300 491L1066.500 496z" stroke-width="1.200"/>
</g>
<!-- right block front-left (dark) -->
<path d="M1122.900 490.200L1155.300 514L1129.400 604.800L1103.500 585.300L1103.800 561.300z" fill="#b71926"/>
<!-- right block right face (hole) -->
<path d="M1155.300 514L1234.400 484.200L1202.800 572.400L1129.400 604.800z" fill="#c21a28"/>
<!-- right block top -->
<path d="M1122.900 490.200L1205.900 466.100L1234.400 484.200L1155.300 514z" fill="#df1c2e"/>
<ellipse cx="1179.200" cy="549" rx="6.600" ry="11.800" fill="#d91b2c" transform="rotate(38 1179.200 549)"/>
<!-- right peg -->
<ellipse cx="1181" cy="486" rx="25.500" ry="13" fill="#c81a29" transform="rotate(8 1181 486)"/>
<ellipse cx="1181.300" cy="482.500" rx="25.500" ry="13" fill="#d91b2c" transform="rotate(8 1181.300 482.500)"/>
<ellipse cx="1182" cy="479.500" rx="18" ry="8.500" fill="#c81a29" transform="rotate(8 1182 479.500)"/>
<path d="M1183.900 432.400L1167 474.500c2 5 10 8.500 18 9 6 .3 11-1 13.100-3.600L1208.500 438.900z" fill="url(#pegR)"/>
<ellipse cx="1196" cy="435.300" rx="12.800" ry="6.200" fill="#e01c2e" transform="rotate(12 1196 435.300)"/>
</g>
<!-- ===== Bracket 1 (left, orange) ===== -->
<g stroke="#3b5f83" stroke-width="1.900">
<!-- base top -->
<path d="M426 580L597 527L633.700 552.500L437.500 611.300z" fill="#e87e20"/>
<!-- base front -->
<path d="M423.700 633.700L423.700 620L437.500 611.300L633.700 552.500L633.700 563.700z" fill="#cb6d1b"/>
<!-- hole -->
<ellipse cx="521.300" cy="567.500" rx="14" ry="8.600" fill="#e0781e" transform="rotate(-6 521.300 567.500)"/>
<path d="M509.500 571.500c5 4 17 3.500 24-2" fill="none" stroke-width="1"/>
<!-- peg -->
<path d="M444.800 547C443.500 540 448 535.800 455.500 535.300C463 535 467 539 467.800 544.500L478 581.500C479 587 475 591 468 591.800C461 592.300 456.200 589.500 455 584z" fill="url(#pegO)"/>
<!-- left arm -->
<path d="M347.500 455C346 450 355 447.500 358.800 449.500C363 451.500 366 454 368.500 458.500L402.500 525L426.300 580L435 602.500C437.200 608 437 611 436.300 613.800L423.800 620L417.500 616.300L385 547.500L376.300 530L350 470z" fill="url(#armL)"/>
<path d="M385 547.500L390 550.500L396 548.500L402 545.500L426.300 580L435 602.500C437.200 608 437 611 436.300 613.800L423.800 620L417.500 616.300z" fill="#d5741d" stroke="none"/>
<path d="M358.800 449.500C363 451.500 366 454 368.500 458.500L402.500 525L426.300 580L435 602.500C437.200 608 437 611 436.300 613.800L431 616.500C431.500 612 430.500 608 428.500 603L420 582L396 528L362 462C360 458 357.500 455 354 452.500z" fill="#c96c1a" stroke="none"/>
<path d="M385 547.500L390 550.500M396 548.500L399 547" fill="none" stroke-width="1"/>
<!-- right tall arm -->
<path d="M588.500 391.700C589 389 590 388.300 591.300 388L603.300 386.500C607 387.500 611 391 614.400 394.400C617.500 399 619.500 404 620.900 410.200L625.600 449L629.300 475.900L633.900 493.500L635.200 523.100L634.400 552.800L620 557.400L609.800 545.400L597.800 528.700L595.900 486.100L593.100 449L588.500 412z" fill="#ca6c1a"/>
<path d="M588.500 391.700C589 389 590 388.300 591.300 388L603.300 386.500C607 387.500 611 391 614.400 394.400L611 397L602 394L595.500 396.500L597 430L600.500 480L601.500 530L597.800 528.700L595.900 486.100L593.100 449L588.500 412z" fill="#e57d20" stroke="none" opacity=".9"/>
<path d="M617 483L629.300 475.900L633.900 493.500L635.200 523.100L634.400 552.800L626 555.500L622 520z" fill="#db771e" stroke="none" opacity=".7"/>
<path d="M616.500 483L619 485L629.300 475.900" fill="none" stroke-width="1"/>
<path d="M597.800 528.700L609.800 545.400L620 557.400" fill="none" stroke-width="1"/>
</g>
<!-- ===== Bracket 2 (right, orange) ===== -->
<g stroke="#3b5f83" stroke-width="1.900">
<!-- base top -->
<path d="M679.500 501L813.500 459.500L835 483.800L687.500 531.500z" fill="#e87e20"/>
<!-- base front -->
<path d="M672.500 551.500L671.500 544L687.500 531.300L835 483.800L851.300 490L851 492.500z" fill="#cb6d1b"/>
<!-- hole -->
<ellipse cx="752" cy="493.800" rx="12.500" ry="7.500" fill="#df771e" transform="rotate(-5 752 493.800)"/>
<!-- peg -->
<path d="M789.300 448.500c0-6.500 3.500-9.800 9.500-9.800s9.500 3.300 9.500 9.800v30.500c0 3.500-4 5.800-9.500 5.800s-9.500-2.300-9.500-5.800z" fill="url(#pegO)"/>
<!-- left arm -->
<path d="M634.800 423.100C635.500 421 637 420 638.500 419.400L648.700 417.200C651 418 653 420 654.300 422.200L667.200 441.700C669.500 446 671 451 671.900 456.500L672.800 486.100L676.500 495.400L683 517.600L686.700 534.300C687 538 686 541 683.900 542.600L672.800 548.100L670 541.700L657 525L651.500 521.300L636.700 462L635.200 439.800z" fill="url(#armL2)"/>
<path d="M636.700 462L642 470L655 488L662 494L667.500 490.500L672.800 486.100L676.500 495.400L683 517.600L686.700 534.300C687 538 686 541 683.900 542.600L672.800 548.100L670 541.700L657 525L651.500 521.300z" fill="#cd6f1b" stroke="none"/>
<path d="M672.800 486.100L676.500 495.400L683 517.600L686.700 534.300C687 538 686 541 683.900 542.600L679 543L676 520L669 492z" fill="#dd781e" stroke="none" opacity=".7"/>
<path d="M656 489L662 494.500L667.500 490.500" fill="none" stroke-width="1"/>
<!-- right arm -->
<path d="M830 367.500C832 364.500 837 362.800 840 363C843 362.500 846 363 847.500 363.800L861.300 377.500C864 381 865.300 385.500 865 390L862.500 407.500L853.800 435L854.300 440L852.500 480L851.300 490L840 492.500L835 483.800L815 460L812.500 415L820 390z" fill="#ca6c1a"/>
<path d="M830 367.500C832 364.500 837 362.800 840 363C843 362.500 846 363 847.500 363.800L861.300 377.500C864 381 865.300 385.500 865 390L862.500 407.500L853.800 435L843 437L815 420L812.500 415L820 390z" fill="url(#armO)" stroke="none" opacity=".9"/>
<path d="M814 421L843.500 438.500L853.800 435" fill="none" stroke-width="1"/>
<path d="M813.500 459.500L835 483.800" fill="none" stroke-width="1"/>
</g>
<!-- ===== washers ===== -->
<g stroke="#3b5f83" stroke-width="1.900">
<path d="M549.4 623.6V634.7A21.4 14.2 0 0 0 592.2 634.7V623.6A21.4 14.2 0 0 0 549.4 623.6z" fill="#0c5a2d"/>
<ellipse cx="570.8" cy="623.6" rx="21.0" ry="13.8" fill="#0f6a35" stroke-width="1.100"/>
<ellipse cx="570.0" cy="622.2" rx="10.0" ry="7.1" fill="#0c5a2d" stroke-width="1.600"/>
<path d="M567.7 662.2V673.3A25.6 17.8 0 0 0 618.9 673.3V662.2A25.6 17.8 0 0 0 567.7 662.2z" fill="#88161f"/>
<ellipse cx="593.3" cy="662.2" rx="25.2" ry="17.4" fill="#9b1a24" stroke-width="1.100"/>
<ellipse cx="593.3" cy="660.0" rx="11.6" ry="8.4" fill="#88161f" stroke-width="1.600"/>
<clipPath id="wh1"><ellipse cx="593.3" cy="660.0" rx="10.8" ry="7.6"/></clipPath>
<ellipse cx="593.8" cy="670.0" rx="10.7" ry="7.7" fill="#d4ebf7" stroke-width="1.200" clip-path="url(#wh1)"/>
<path d="M592.2 705.6V717.2A26.7 18.9 0 0 0 645.6 717.2V705.6A26.7 18.9 0 0 0 592.2 705.6z" fill="#88161f"/>
<ellipse cx="618.9" cy="705.6" rx="26.3" ry="18.5" fill="#9b1a24" stroke-width="1.100"/>
<ellipse cx="618.2" cy="704.4" rx="12.9" ry="9.3" fill="#88161f" stroke-width="1.600"/>
<clipPath id="wh2"><ellipse cx="618.2" cy="704.4" rx="12.1" ry="8.5"/></clipPath>
<ellipse cx="618.7" cy="714.8" rx="11.9" ry="8.6" fill="#d4ebf7" stroke-width="1.200" clip-path="url(#wh2)"/>
<path d="M622.6 753.1V765.3A23.7 18.0 0 0 0 670.0 765.3V753.1A23.7 18.0 0 0 0 622.6 753.1z" fill="#0c5a2d"/>
<ellipse cx="646.3" cy="753.1" rx="23.3" ry="17.6" fill="#0f6a35" stroke-width="1.100"/>
<ellipse cx="646.2" cy="753.3" rx="12.2" ry="8.9" fill="#0c5a2d" stroke-width="1.600"/>
<clipPath id="wh3"><ellipse cx="646.2" cy="753.3" rx="11.4" ry="8.1"/></clipPath>
<ellipse cx="646.7" cy="764.3" rx="11.2" ry="8.2" fill="#d4ebf7" stroke-width="1.200" clip-path="url(#wh3)"/>
<path d="M650.4 801.7V815.0A24.8 18.3 0 0 0 700.0 815.0V801.7A24.8 18.3 0 0 0 650.4 801.7z" fill="#0c5a2d"/>
<ellipse cx="675.2" cy="801.7" rx="24.4" ry="17.9" fill="#0f6a35" stroke-width="1.100"/>
<ellipse cx="674.4" cy="802.2" rx="12.7" ry="9.3" fill="#0c5a2d" stroke-width="1.600"/>
<clipPath id="wh4"><ellipse cx="674.4" cy="802.2" rx="11.9" ry="8.5"/></clipPath>
<ellipse cx="674.9" cy="814.2" rx="11.7" ry="8.6" fill="#d4ebf7" stroke-width="1.200" clip-path="url(#wh4)"/>
</g>
<!-- green link -->
<g fill="#2f9a3c" stroke="#3b5f83" stroke-width="3.200" stroke-linejoin="round"><path d="M625.0 597.5V606.5A23.8 15.0 0 0 0 672.6 606.5V597.5A23.8 15.0 0 0 0 625.0 597.5z"/><path d="M667.5 670.0V679.0A25.0 17.0 0 0 0 717.5 679.0V670.0A25.0 17.0 0 0 0 667.5 670.0z"/><path d="M650.5 612.0L672.0 604.0L697.0 654.0L697.0 663.0L676.0 667.0L650.5 621.0z"/></g>
<g fill="#2f9a3c"><path d="M625.0 597.5V606.5A23.8 15.0 0 0 0 672.6 606.5V597.5A23.8 15.0 0 0 0 625.0 597.5z"/><path d="M667.5 670.0V679.0A25.0 17.0 0 0 0 717.5 679.0V670.0A25.0 17.0 0 0 0 667.5 670.0z"/><path d="M650.5 612.0L672.0 604.0L697.0 654.0L697.0 663.0L676.0 667.0L650.5 621.0z"/></g>
<g fill="#40ae49" stroke="#3b5f83" stroke-width="2.600" stroke-linejoin="round"><path d="M625.0 597.5A23.8 15.0 0 1 0 672.6 597.5A23.8 15.0 0 1 0 625.0 597.5z"/><path d="M667.5 670.0A25.0 17.0 0 1 0 717.5 670.0A25.0 17.0 0 1 0 667.5 670.0z"/><path d="M650.5 612.0L672.0 604.0L697.0 654.0L676.0 658.0z"/></g>
<g fill="#40ae49"><path d="M625.0 597.5A23.8 15.0 0 1 0 672.6 597.5A23.8 15.0 0 1 0 625.0 597.5z"/><path d="M667.5 670.0A25.0 17.0 0 1 0 717.5 670.0A25.0 17.0 0 1 0 667.5 670.0z"/><path d="M650.5 612.0L672.0 604.0L697.0 654.0L676.0 658.0z"/></g>
<ellipse cx="649.5" cy="596.3" rx="12.0" ry="7.5" fill="#2f9a3c" stroke="#3b5f83" stroke-width="1.500"/>
<clipPath id="gl0"><ellipse cx="649.5" cy="596.3" rx="11.3" ry="6.8"/></clipPath>
<ellipse cx="649.5" cy="601.2" rx="12.0" ry="7.5" fill="#d8edf8" stroke="#3b5f83" stroke-width="1.200" clip-path="url(#gl0)"/>
<ellipse cx="692.5" cy="670.0" rx="13.0" ry="8.7" fill="#2f9a3c" stroke="#3b5f83" stroke-width="1.500"/>
<clipPath id="gl1"><ellipse cx="692.5" cy="670.0" rx="12.3" ry="8.0"/></clipPath>
<ellipse cx="692.5" cy="675.0" rx="13.0" ry="8.7" fill="#d8edf8" stroke="#3b5f83" stroke-width="1.200" clip-path="url(#gl1)"/>
<!-- light green link -->
<g fill="#a9c59d" stroke="#3b5f83" stroke-width="3.200" stroke-linejoin="round"><path d="M727.4 558.1V566.1A22.2 14.8 0 0 0 771.8 566.1V558.1A22.2 14.8 0 0 0 727.4 558.1z"/><path d="M843.6 707.8V715.8A26.0 17.8 0 0 0 895.6 715.8V707.8A26.0 17.8 0 0 0 843.6 707.8z"/><path d="M752.0 572.0L770.5 565.0L875.0 691.0L875.0 699.0L852.0 703.0L752.0 580.0z"/></g>
<g fill="#a9c59d"><path d="M727.4 558.1V566.1A22.2 14.8 0 0 0 771.8 566.1V558.1A22.2 14.8 0 0 0 727.4 558.1z"/><path d="M843.6 707.8V715.8A26.0 17.8 0 0 0 895.6 715.8V707.8A26.0 17.8 0 0 0 843.6 707.8z"/><path d="M752.0 572.0L770.5 565.0L875.0 691.0L875.0 699.0L852.0 703.0L752.0 580.0z"/></g>
<g fill="#c6ddb9" stroke="#3b5f83" stroke-width="2.600" stroke-linejoin="round"><path d="M727.4 558.1A22.2 14.8 0 1 0 771.8 558.1A22.2 14.8 0 1 0 727.4 558.1z"/><path d="M843.6 707.8A26.0 17.8 0 1 0 895.6 707.8A26.0 17.8 0 1 0 843.6 707.8z"/><path d="M752.0 572.0L770.5 565.0L875.0 691.0L852.0 695.0z"/></g>
<g fill="#c6ddb9"><path d="M727.4 558.1A22.2 14.8 0 1 0 771.8 558.1A22.2 14.8 0 1 0 727.4 558.1z"/><path d="M843.6 707.8A26.0 17.8 0 1 0 895.6 707.8A26.0 17.8 0 1 0 843.6 707.8z"/><path d="M752.0 572.0L770.5 565.0L875.0 691.0L852.0 695.0z"/></g>
<ellipse cx="749.6" cy="557.5" rx="10.4" ry="6.5" fill="#a9c59d" stroke="#3b5f83" stroke-width="1.500"/>
<clipPath id="lg0"><ellipse cx="749.6" cy="557.5" rx="9.7" ry="5.8"/></clipPath>
<ellipse cx="749.6" cy="561.9" rx="10.4" ry="6.5" fill="#d8edf8" stroke="#3b5f83" stroke-width="1.200" clip-path="url(#lg0)"/>
<ellipse cx="869.6" cy="707.3" rx="13.3" ry="8.3" fill="#a9c59d" stroke="#3b5f83" stroke-width="1.500"/>
<clipPath id="lg1"><ellipse cx="869.6" cy="707.3" rx="12.6" ry="7.6"/></clipPath>
<ellipse cx="869.6" cy="711.7" rx="13.3" ry="8.3" fill="#d8edf8" stroke="#3b5f83" stroke-width="1.200" clip-path="url(#lg1)"/>
<!-- ===== blue knob ===== -->
<g stroke="#2b5f86" stroke-width="2">
<path d="M739.700 742.900V770A45.300 29.500 0 0 0 830.300 770V742.900A45.300 33.600 0 0 0 739.700 742.900z" fill="url(#sideB)"/>
<ellipse cx="785" cy="742.900" rx="45.300" ry="33.600" fill="#0a9cd6" stroke="none"/>
<path d="M755.500 713.300V751A12.700 7.600 0 0 0 780.900 751V713.300A12.700 8 0 0 0 755.500 713.300z" fill="url(#pegB)"/>
<ellipse cx="768.200" cy="713.300" rx="11" ry="6.600" fill="#0f9bd4" stroke-width="1.200"/>
</g>
</g>

</svg>
<!-- view cube (coords relative to canvas: y-210) -->
<svg class="abs" style="left:20px;top:15px" width="130" height="130" viewBox="20 225 130 130">
<defs>
<linearGradient id="vcr" x1="0" y1="0" x2="0" y2="1"><stop offset="0" stop-color="#fdfdfd"/><stop offset="1" stop-color="#e4e4e7"/></linearGradient>
<linearGradient id="vcl" x1="0" y1="0" x2="0" y2="1"><stop offset="0" stop-color="#fcfcfc"/><stop offset="1" stop-color="#e9e9eb"/></linearGradient>
</defs>
<g stroke="#d4d4d7" stroke-width="1.500" stroke-linejoin="round">
<path d="M32 254.100L91 236.800L130.100 271.300L62.100 296z" fill="#fefefe"/>
<path d="M62.100 296L130.100 271.300L122.300 320.100L65.700 347.200z" fill="url(#vcr)"/>
<path d="M32 254.100L62.100 296L65.700 347.200L39.900 304.400z" fill="url(#vcl)"/>
</g>
<path d="M65.700 347.200L122.300 320.100" stroke="#c6c6c9" stroke-width="2.200"/>
<text transform="matrix(0.840 -0.336 0.150 1.020 76.300 323)" font-family="Liberation Sans,sans-serif" font-weight="bold" font-style="italic" font-size="15" fill="#a3a8b5">RIGHT</text>
<text transform="matrix(0.749 0.781 -0.954 0.333 64.500 254)" font-family="Liberation Sans,sans-serif" font-weight="bold" font-size="13" fill="#a6abb7">TOP</text>
<text transform="matrix(0.545 0.990 -0.135 1.080 40.600 289)" font-family="Liberation Sans,sans-serif" font-weight="bold" font-size="9" fill="#b4b7c1">FRONT</text>
</svg>
<!-- nav buttons -->
<svg class="abs" style="left:20px;top:155px" width="48" height="260" viewBox="20 365 48 260" fill="none" stroke="#bcbcbc" stroke-linecap="round" stroke-linejoin="round">
<g stroke="#a2a7b0" stroke-width="1.100" fill="#fafafa">
<circle cx="43.900" cy="391.300" r="20.700"/><circle cx="43.900" cy="444" r="20.700"/><circle cx="43.900" cy="496.300" r="20.700"/><circle cx="43.900" cy="548.500" r="20.700"/><circle cx="43.900" cy="601.300" r="20.700"/>
</g>
<path d="M34.800 391.800L43.600 382.500L52.400 391.800M37.800 391V399.500H41.500V392.500H45.700V399.500H49.400V391" stroke-width="1.400"/>
<path d="M35 440V435.300H39.500M48 435.300H52.500V440M52.500 448V452.700H48M39.500 452.700H35V448" stroke-width="1.400"/>
<path d="M43.600 489V504M36 496.500H51.200" stroke-width="2.600"/>
<path d="M35 548.700H52" stroke-width="2.600"/>
<path d="M43.600 591.500L49.500 594.500V603L43.300 606.500L37 603V594.500zM37 594.500L43.300 597.500L49.500 594.500M43.300 597.500V606.500M32 601L42.800 611L55 601" stroke-width="1.700"/>
</svg>
<!-- edit grid / snap grid -->
<div class="abs" style="left:1450px;top:741px;width:113px;height:27px;border:1px solid #e1e4e9;border-radius:3px;background:#fcfcfc;font-size:15px;line-height:23.500px;text-align:center;color:#8b98a8;letter-spacing:.2px">Edit Grid</div>
<div class="abs" style="left:1397px;top:784px;font-size:15px;line-height:20px;color:#4e6074;white-space:nowrap;letter-spacing:.05px">Snap Grid</div>
<div class="abs" style="left:1473px;top:781px;width:90px;height:27px;border:1px solid #dfe2e8;border-radius:3px;background:#fcfcfc;font-size:15px;line-height:25px;color:#8b98a8;padding-left:10px;letter-spacing:.05px">1.0 mm</div>
<svg class="abs" style="left:1542px;top:791.500px" width="8" height="6" viewBox="0 0 8 6"><path d="M.3 5L4 .6L7.700 5z" fill="#2b2b2b"/></svg>

</div>
<div id="panel">
<svg class="abs" style="left:0;top:0" width="345" height="820" viewBox="0 0 345 820">
<defs>
<pattern id="stripe" width="15" height="15" patternUnits="userSpaceOnUse" patternTransform="rotate(-47)"><rect width="15" height="15" fill="#cbd1da"/><rect width="7.500" height="15" fill="#b0b7c2"/></pattern>
<pattern id="stripe2" width="15" height="15" patternUnits="userSpaceOnUse" patternTransform="rotate(-47)"><rect width="15" height="15" fill="#bcc3cd"/><rect width="7.500" height="15" fill="#a3aab6"/></pattern>
<pattern id="stripe3" width="15" height="15" patternUnits="userSpaceOnUse" patternTransform="rotate(-47)"><rect width="15" height="15" fill="#d9dde4"/><rect width="7.500" height="15" fill="#b9bfc9"/></pattern>
<radialGradient id="sph" cx=".62" cy=".32" r=".75"><stop offset="0" stop-color="#19a6e2"/><stop offset=".55" stop-color="#1796d2"/><stop offset="1" stop-color="#1479ad"/></radialGradient>
<linearGradient id="cylo" x1="0" y1="0" x2="1" y2="0"><stop offset="0" stop-color="#8a4f12"/><stop offset=".12" stop-color="#a95c17"/><stop offset=".35" stop-color="#c0661a"/><stop offset=".65" stop-color="#d5731c"/><stop offset=".87" stop-color="#da781d"/><stop offset="1" stop-color="#c56a18"/></linearGradient>
<linearGradient id="cylg" x1="0" y1="0" x2="1" y2="0"><stop offset="0" stop-color="#2a3140" stop-opacity=".42"/><stop offset=".35" stop-color="#2a3140" stop-opacity=".2"/><stop offset=".7" stop-color="#fff" stop-opacity=".05"/><stop offset=".9" stop-color="#fff" stop-opacity=".12"/><stop offset="1" stop-color="#2a3140" stop-opacity=".08"/></linearGradient>
<filter id="soft" x="-30%" y="-30%" width="160%" height="160%"><feGaussianBlur stdDeviation="9"/></filter>
</defs>
<!-- workplane icon -->
<g fill="none" stroke="#1a8cc7" stroke-width="1.300">
<path d="M70.500 20.500L110.800 17.800L110.800 60L71.800 57.500z" stroke-width="2.200" fill="#eef2f7"/>
<path d="M77 20v38M83.500 19.600v38.800M96.800 18.800v40.400M103.600 18.400v41.200M70.700 26.700l40-1.600M70.900 33l40-1M71.100 39.200h39.700M71.300 45.300l39.500.9M71.500 51.300l39.300 1.800"/>
<path d="M90.200 19.200v39.600" stroke-width="1.900"/>
</g>
<!-- ruler icon -->
<g fill="none" stroke="#1a8cc7">
<path d="M233 21h9.700l1.300 27.800 31.500 3.700-.5 8.600-38.800-5z" stroke-width="2"/>
<path d="M237.500 27h4.500M238 32h4M238.300 37h4.300M238.600 42h4.200M249 50v4.500M255 50.800v3.600M261.500 51.500v4.500M268 52.300v3.500" stroke-width="1.200"/>
</g>
<path d="M0 99.300h345" stroke="#dde0e6" stroke-width="1.200"/>
<!-- dropdown card -->
<rect x="6.800" y="109" width="331.700" height="77" rx="3.500" fill="#000" opacity=".15" filter="url(#soft)" transform="translate(0 7) scale(1 .97)"/>
<rect x="6.800" y="107.500" width="331.700" height="76.500" rx="3.500" fill="#f3f4f7" stroke="#e1e4ea" stroke-width="1"/>
<path d="M304 143.700h12.200l-6.100 6.900z" fill="#0a0a0a"/>
<path d="M5.800 198.300h332.500" stroke="#dde0e6" stroke-width="1.200"/>
<rect x="329.300" y="199" width="9.600" height="168.500" rx="4.800" fill="#b9b9bb"/>
<!-- hole box -->
<ellipse cx="92" cy="285" rx="52" ry="56" fill="#000" opacity=".05" filter="url(#soft)"/>
<g stroke="#80868f" stroke-width="1.800" stroke-linejoin="round">
<path d="M46.300 262L74.700 230.400L138.500 240L120.300 274.100z" fill="url(#stripe3)"/>
<path d="M46.300 262L120.300 274.100L117.200 334.900L51.200 322.700z" fill="url(#stripe2)"/>
<path d="M120.300 274.100L138.500 240L135.800 301L117.200 334.900z" fill="url(#stripe)"/>
</g>
<!-- hole cylinder -->
<ellipse cx="250" cy="283" rx="44" ry="52" fill="#000" opacity=".05" filter="url(#soft)"/>
<path d="M213.200 251.500v57.500a36.800 19.500 0 0 0 73.600 0v-57.500z" fill="url(#stripe3)" stroke="#80868f" stroke-width="1.800"/>
<path d="M213.200 251.500v57.500a36.800 19.500 0 0 0 73.600 0v-57.500z" fill="url(#cylg)"/>
<ellipse cx="250" cy="251.500" rx="36.800" ry="17.500" fill="url(#stripe3)" stroke="#80868f" stroke-width="1.500"/>
<!-- red box -->
<ellipse cx="92" cy="476" rx="52" ry="56" fill="#000" opacity=".05" filter="url(#soft)"/>
<g stroke="#8f1120" stroke-width="1.500" stroke-linejoin="round">
<path d="M46.300 451.300L74.600 420.800L138.300 431.700L122.500 462.500z" fill="#ca172a"/>
<path d="M46.300 451.300L122.500 462.500L118.300 525L51.700 509.600z" fill="#a91424"/>
<path d="M122.500 462.500L138.300 431.700L135.800 482.500L118.300 525z" fill="#bd1728"/>
</g>
<!-- orange cylinder -->
<ellipse cx="250" cy="474" rx="44" ry="52" fill="#000" opacity=".05" filter="url(#soft)"/>
<path d="M213.400 441.700v57.300a36.800 19 0 0 0 73.600 0v-57.300z" fill="url(#cylo)" stroke="#a9540c" stroke-width="1"/>
<ellipse cx="250.200" cy="441.700" rx="36.800" ry="17.700" fill="#d4731c" stroke="#a9540c" stroke-width="1.200"/>
<!-- sphere -->
<ellipse cx="94.600" cy="662" rx="46" ry="46" fill="#000" opacity=".06" filter="url(#soft)"/>
<circle cx="94.600" cy="660.800" r="35.200" fill="url(#sph)" stroke="#12699a" stroke-width=".8"/>
<!-- scribble -->
<ellipse cx="250" cy="674" rx="42" ry="44" fill="#000" opacity=".04" filter="url(#soft)"/>
<linearGradient id="scg" gradientUnits="userSpaceOnUse" x1="214" y1="0" x2="284" y2="0"><stop offset="0" stop-color="#86a8c4"/><stop offset=".25" stop-color="#7495b0"/><stop offset=".5" stop-color="#6d8ca6"/><stop offset=".8" stop-color="#7c9db8"/><stop offset="1" stop-color="#8cb0cd"/></linearGradient>
<g id="scr" fill="none" stroke-linecap="round" stroke-linejoin="round">
<path d="M220.500 655v3.500" stroke-width="10"/>
<path d="M224 653.500C229 655 231 663.500 237 664.500C241 663.500 241 650 242.500 646L273.500 676" stroke-width="10.500"/>
<path d="M265.500 662L268.300 641" stroke-width="8.500"/>
<path d="M277.400 645v.1" stroke-width="8.500"/>
</g>
<use href="#scr" y="30" stroke="url(#scg)"/>
<use href="#scr" y="28" stroke="url(#scg)"/>
<use href="#scr" y="26" stroke="url(#scg)"/>
<use href="#scr" y="24" stroke="url(#scg)"/>
<use href="#scr" y="22" stroke="url(#scg)"/>
<use href="#scr" y="20" stroke="url(#scg)"/>
<use href="#scr" y="18" stroke="url(#scg)"/>
<use href="#scr" y="16" stroke="url(#scg)"/>
<use href="#scr" y="14" stroke="url(#scg)"/>
<use href="#scr" y="12" stroke="url(#scg)"/>
<use href="#scr" y="10" stroke="url(#scg)"/>
<use href="#scr" y="8" stroke="url(#scg)"/>
<use href="#scr" y="6" stroke="url(#scg)"/>
<use href="#scr" y="4" stroke="url(#scg)"/>
<use href="#scr" y="2" stroke="url(#scg)"/>
<use href="#scr" stroke="#9cc4e2"/>
<!-- next-row shadows -->
<ellipse cx="94" cy="850" rx="40" ry="40" fill="#000" opacity=".07" filter="url(#soft)"/>
<ellipse cx="250" cy="850" rx="40" ry="40" fill="#000" opacity=".07" filter="url(#soft)"/>
</svg>
<div class="lbl" style="left:41.600px;top:70.500px;width:100px">Workplane</div>
<div class="lbl" style="left:203.200px;top:70.500px;width:100px">Ruler</div>
<div class="lbl" style="left:20.500px;top:119.500px;text-align:left;font-size:13.700px;color:#5b6c7f;letter-spacing:.3px">Tinkercad</div>
<div class="lbl" style="left:20.300px;top:147px;text-align:left;font-size:18.200px;line-height:22px;color:#3f5168;letter-spacing:.25px">Basic Shapes</div>
<div class="lbl" style="left:44.500px;top:344.700px;width:100px">Box</div>
<div class="lbl" style="left:200.700px;top:344.700px;width:100px">Cylinder</div>
<div class="lbl" style="left:44.500px;top:534.300px;width:100px">Box</div>
<div class="lbl" style="left:200.700px;top:534.300px;width:100px">Cylinder</div>
<div class="lbl" style="left:44.200px;top:725.500px;width:100px">Sphere</div>
<div class="lbl" style="left:200.700px;top:725.500px;width:100px">Scribble</div>
</div>
<div class="abs" style="left:1563px;top:592px;width:20px;height:59px;background:#f3f4f6;border:1px solid #d9dde6;border-right:none"></div>
<svg class="abs" style="left:1565px;top:604px" width="18" height="36" viewBox="0 0 18 36"><path d="M5.100 4.600L13.200 18.300L5.300 31.800" fill="none" stroke="#0a0a0a" stroke-width="2.700"/></svg>
<div id="task">
<svg class="abs" style="left:19px;top:15px" width="22" height="22" viewBox="0 0 22 22" fill="#fff"><path d="M1 3.800l8.300-1.200v7.600H1zM10.300 2.500L21 1v9.200H10.300zM1 11.200h8.300v7.600L1 17.600zM10.300 11.200H21V20.500l-10.700-1.500z"/></svg>
<div class="abs" style="left:60px;top:0;width:430px;height:50px;background:#f2f2f2;border:1px solid #c8c8c8;border-top:1.500px solid #bdbdbd"></div>
<svg class="abs" style="left:74px;top:13px" width="24" height="24" viewBox="0 0 24 24"><circle cx="14.200" cy="9.300" r="6.600" fill="none" stroke="#1a1a1a" stroke-width="1.600"/><path d="M9.600 14L1.800 22" stroke="#1a1a1a" stroke-width="1.800"/></svg>
<div class="t" style="left:110.500px;top:14px;font-size:18.300px;line-height:22px;color:#2b2b2b">Type here to search</div>
<!-- task view -->
<svg class="abs" style="left:507px;top:12px" width="26" height="26" viewBox="0 0 26 26" fill="none" stroke="#fff" stroke-width="1.400"><rect x="3.700" y="7.500" width="13.500" height="10.500"/><path d="M3 3.200h15M3 22.500h15M22 3v5.500M22 11.500v11.500"/><circle cx="22" cy="10" r="1" fill="#fff"/></svg>
<!-- edge -->
<svg class="abs" style="left:570px;top:11px" width="28" height="28" viewBox="0 0 28 28"><path d="M2 13.500C3 6.500 8 2 14.500 2c7 0 11.500 5 11.500 12v2.500H9.800c.4 3.800 3.400 5.800 7.200 5.800 2.900 0 5.200-.7 7.500-2v5c-2.500 1.300-5.500 2-8.700 2-7.300 0-12-4.300-12-11.200 0-4.300 2.200-7.700 5.700-9.500C6 7.500 3.500 10 2 13.500zM9.900 12h9.600c0-3.200-1.700-5-4.600-5-2.800 0-4.600 2-5 5z" fill="#1787e0"/></svg>
<!-- explorer -->
<svg class="abs" style="left:630px;top:12px" width="31" height="27" viewBox="0 0 31 27"><path d="M1 3.500a1.500 1.500 0 0 1 1.500-1.500h9l2.500 3h15a1.500 1.500 0 0 1 1.500 1.500V8H1z" fill="#e9a825"/><path d="M1 6.500h29v17a1.500 1.500 0 0 1-1.500 1.500h-26A1.500 1.500 0 0 1 1 23.500z" fill="#fbd55c"/><path d="M8 17h15v8H8z" fill="#3b93da"/><path d="M11.500 20.300h8V25h-8z" fill="#fbd55c"/></svg>
<div class="abs" style="left:621px;top:47px;width:51px;height:3px;background:#7cb7ea"></div>
<!-- steam -->
<svg class="abs" style="left:694px;top:11px" width="28" height="28" viewBox="0 0 28 28"><defs><linearGradient id="stm" x1="0" y1="0" x2="0" y2="1"><stop offset="0" stop-color="#12264a"/><stop offset="1" stop-color="#1a73b0"/></linearGradient></defs><circle cx="14" cy="14" r="13.500" fill="url(#stm)"/><circle cx="18.500" cy="10.500" r="4.600" fill="none" stroke="#fff" stroke-width="1.900"/><circle cx="18.500" cy="10.500" r="2" fill="#fff"/><path d="M1 14.500l8.500 3.600 5-4.600" fill="none" stroke="#fff" stroke-width="3" stroke-linejoin="round"/><circle cx="10" cy="19.500" r="3.400" fill="#fff"/><circle cx="10" cy="19.500" r="1.800" fill="#16467c"/></svg>
<!-- store -->
<svg class="abs" style="left:755px;top:9px" width="29" height="32" viewBox="0 0 29 32"><path d="M9.500 9V6.500a5 5 0 0 1 10 0V9" fill="none" stroke="#d8d8d8" stroke-width="1.600"/><path d="M1 9h27v20a1.500 1.500 0 0 1-1.500 1.500h-24A1.500 1.500 0 0 1 1 29z" fill="#f4f4f4"/><rect x="9" y="13.500" width="5" height="5" fill="#f25022"/><rect x="15" y="13.500" width="5" height="5" fill="#7fba00"/><rect x="9" y="19.500" width="5" height="5" fill="#00a4ef"/><rect x="15" y="19.500" width="5" height="5" fill="#ffb900"/></svg>
<!-- predator -->
<svg class="abs" style="left:817px;top:10px" width="29" height="31" viewBox="0 0 29 31"><rect x="1" y="1" width="27" height="29" rx="4" fill="#0e1418"/><path d="M2.500 5v20M26.500 5v20" stroke="#1fb0d8" stroke-width="2"/><path d="M6 8l5 4 1.500 8.500-2.500 5.500-2-8zM23 8l-5 4-1.500 8.500 2.500 5.500 2-8zM12.500 12l2 5 2-5-.5 12-1.500 3-1.500-3z" fill="#9aa4ab"/></svg>
<!-- mail -->
<svg class="abs" style="left:877px;top:9px" width="46" height="38" viewBox="0 0 46 38"><path d="M2 13.500L16.500 3 31 13.500V31H2z" fill="#1283da"/><path d="M4.500 12h24v12h-24z" fill="#fff"/><path d="M2 13.500l14.500 10.500L31 13.500V31H2z" fill="#2c9dec"/><path d="M2 31l12-11h5l12 11z" fill="#1476c4"/><circle cx="31.200" cy="26" r="8.600" fill="#33302e" stroke="#e8e8e8" stroke-width="1.200"/><text x="31.200" y="31" font-size="14" font-family="Liberation Sans,sans-serif" fill="#fff" text-anchor="middle" font-weight="bold">2</text></svg>
<!-- chrome active -->
<div class="abs" style="left:926px;top:0;width:61px;height:50px;background:#4d4a48"></div>
<div class="abs" style="left:926px;top:47px;width:61px;height:3px;background:#7cb7ea"></div>
<svg class="abs" style="left:941px;top:9px" width="34" height="34" viewBox="0 0 34 34"><circle cx="14.500" cy="15" r="13" fill="#fff"/><path d="M14.500 2a13 13 0 0 1 11.300 6.500H14.500a6.500 6.500 0 0 0-6.200 4.400L3.700 7.300A13 13 0 0 1 14.500 2z" fill="#db4437"/><path d="M3.200 8a13 13 0 0 0 9.500 19.900l4.700-6.900a6.500 6.500 0 0 1-8.600-2.700z" fill="#0f9d58"/><path d="M26.200 9.200H17a6.500 6.500 0 0 1 2.800 9.300l-5.600 9.500a13 13 0 0 0 12-18.800z" fill="#ffcd40"/><circle cx="14.500" cy="15" r="5.200" fill="#4285f4" stroke="#fff" stroke-width="1.300"/><defs><radialGradient id="av3" cx=".5" cy=".45" r=".6"><stop offset="0" stop-color="#d63a1c"/><stop offset=".6" stop-color="#a02a1c"/><stop offset="1" stop-color="#5e2019"/></radialGradient></defs><circle cx="23" cy="23.500" r="9.300" fill="url(#av3)"/><circle cx="20.300" cy="23" r="1.500" fill="#ff6a3a"/><circle cx="25.300" cy="23" r="1.500" fill="#ff6a3a"/></svg>
<!-- fusion -->
<svg class="abs" style="left:1002px;top:10px" width="32" height="32" viewBox="0 0 32 32"><defs><linearGradient id="f360" x1="0" y1="0" x2="1" y2="1"><stop offset="0" stop-color="#f6e3cc"/><stop offset="1" stop-color="#e9c9a4"/></linearGradient></defs><rect x="1" y="1" width="30" height="30" fill="url(#f360)"/><path d="M10 4.500h13l-2 4.500h-6v4.500h6l-2 4.500h-4v6.500l-5 2z" fill="#f0821c"/><path d="M10 4.500l5 2v20l-5 2z" fill="#c45f10"/><text x="22" y="29" font-size="5.500" font-family="Liberation Sans,sans-serif" fill="#e07b1c" text-anchor="middle" font-weight="bold">360</text></svg>
<!-- arduino -->
<svg class="abs" style="left:1066px;top:11px" width="28" height="28" viewBox="0 0 28 28"><circle cx="14" cy="14" r="13.500" fill="#0f979d"/><path d="M14 14c-1.500-2.300-3-3.800-5.300-3.800a3.800 3.800 0 0 0 0 7.600c2.300 0 3.800-1.500 5.300-3.800zm0 0c1.500 2.300 3 3.800 5.300 3.800a3.800 3.800 0 0 0 0-7.600c-2.300 0-3.800 1.500-5.300 3.800z" fill="none" stroke="#fff" stroke-width="1.800"/><path d="M7.200 14h3M17.800 14h3M19.300 12.500v3" stroke="#fff" stroke-width="1.100"/></svg>
<!-- tray -->
<svg class="abs" style="left:1548px;top:14px" width="180" height="26" viewBox="0 0 180 26" fill="none" stroke="#fff" stroke-width="1.400"><path d="M4 15l8-8 8 8"/><g transform="translate(-2.500 0)"><path d="M36.500 16.500a4.300 4.300 0 0 1 2-8 6 6 0 0 1 11-1 4.600 4.600 0 0 1 .5 9.100z" fill="#fff" stroke="none"/><path d="M37 12c3-3 8-3 14 4" stroke="#b9b9b9" stroke-width="1"/></g><rect x="66.500" y="7" width="14.500" height="9.500" stroke-width="1.300"/><path d="M82 10v3.500" stroke-width="1.600"/><rect x="67.500" y="8" width="4" height="7.500" fill="#fff" stroke="none"/><path d="M63.500 3v4M66 3v4M62.500 7h4.500v3l-2.200 2v4" stroke-width="1.100"/><path d="M96 19.500a12 12 0 0 1 12-12M100 19.500a8 8 0 0 1 8-8M104 19.500a4 4 0 0 1 4-4" stroke-width="1.300"/><circle cx="108.500" cy="19" r="1.300" fill="#fff" stroke="none"/><path d="M122.500 9.500h3l4-4v15l-4-4h-3z" stroke-width="1.200"/><path d="M132.500 9.500a4.500 4.500 0 0 1 0 7M135.500 7a8 8 0 0 1 0 12M138.500 4.500a11.500 11.500 0 0 1 0 17" stroke-width="1.200"/><path d="M157 3l5 3.200-5 3.200-5-3.200zM167 3l5 3.200-5 3.200-5-3.200zM167 10l5 3.200-5 3.200-5-3.200zM162 17l4 2.500-4 2.500" fill="#fff" stroke="none"/><rect x="152" y="11.500" width="10.500" height="11" rx="1.500" fill="#d9132b" stroke="none"/></svg>
<div class="t" style="left:1704.800px;top:26.500px;font-size:9.500px;line-height:10px;font-weight:bold">1</div>
<div class="t" style="left:1733.500px;top:17px;font-size:14.600px;line-height:18px;letter-spacing:-.75px">ENG</div>
<div class="t" style="left:1782.500px;top:5px;font-size:15.300px;line-height:18px;letter-spacing:-.8px">10:54 PM</div>
<div class="t" style="left:1778px;top:27.500px;font-size:15.300px;line-height:18px;letter-spacing:-.05px">8/18/2020</div>
<svg class="abs" style="left:1866px;top:12px" width="36" height="36" viewBox="0 0 36 36"><path d="M3 3.500h20.500v16H9.500L5.500 23.500v-4H3z" fill="#fff"/><path d="M6.500 8h13.500M6.500 11.500h13.500M6.500 15h13.500" stroke="#33302e" stroke-width="1"/><circle cx="22.500" cy="22.500" r="9.600" fill="#33302e" stroke="#9a9a9a" stroke-width="1"/><text x="22.500" y="27.500" font-size="13.500" font-family="Liberation Sans,sans-serif" fill="#fff" text-anchor="middle" font-weight="bold">3</text></svg>
<div class="abs" style="left:1914px;top:0;width:1px;height:50px;background:#6a6765"></div>
</div>
</body>
</html>
